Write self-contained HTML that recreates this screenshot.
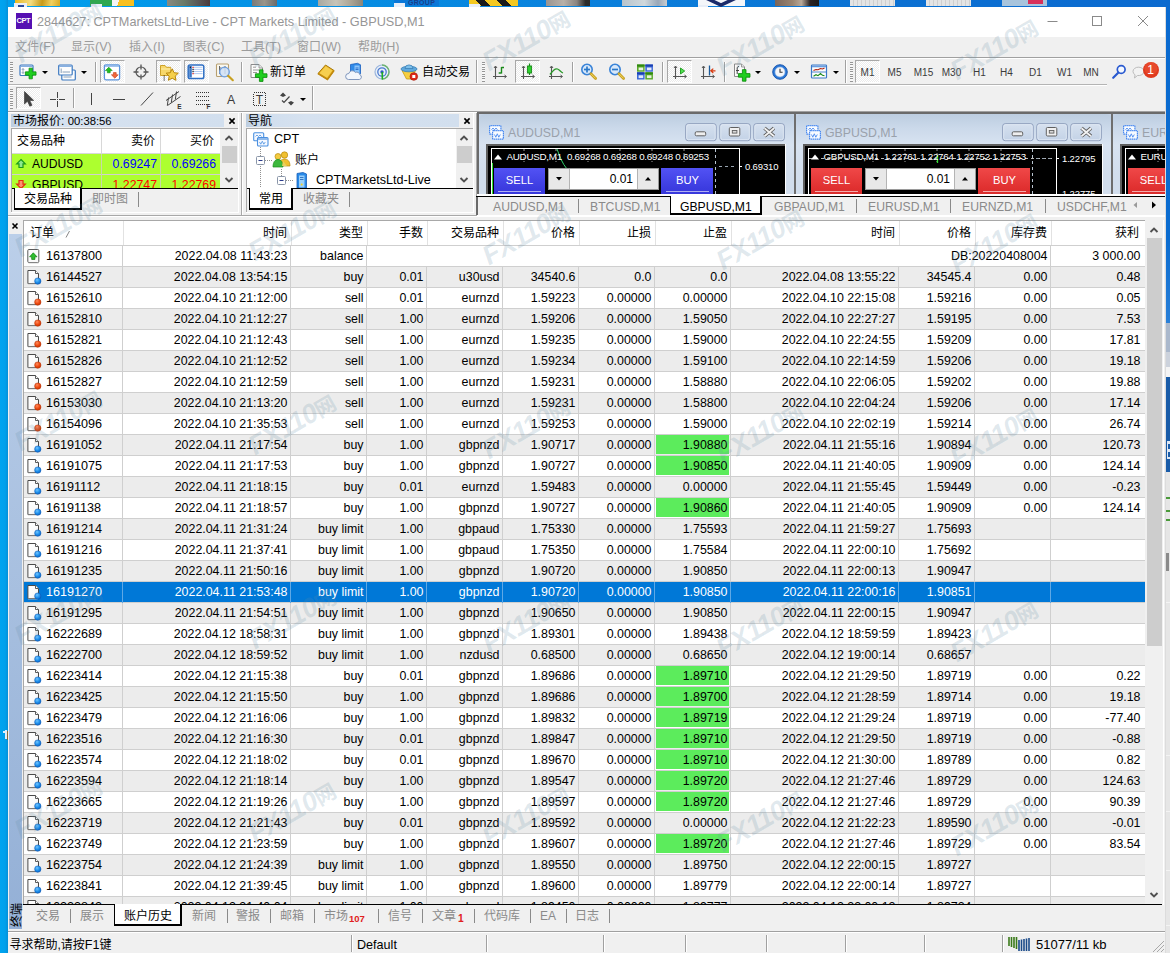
<!DOCTYPE html>
<html lang="zh-CN"><head><meta charset="utf-8"><title>2844627: CPTMarketsLtd-Live - CPT Markets Limited - GBPUSD,M1</title>
<style>
html,body{margin:0;padding:0;}
body{width:1170px;height:953px;overflow:hidden;background:#0a78d4;font-family:"Liberation Sans","Noto Sans CJK SC",sans-serif;font-size:12.5px;color:#000;}
#root{position:absolute;left:0;top:0;width:1170px;height:953px;overflow:hidden;}
#root div{position:absolute;box-sizing:border-box;}
#root span.t{position:absolute;white-space:nowrap;line-height:16px;}
#root span.c{position:absolute;white-space:nowrap;line-height:16px;font-family:"Liberation Sans","Noto Sans CJK SC",sans-serif;font-size:12.5px;}
#root svg{position:absolute;overflow:visible;}

</style></head><body>
<div id="root">
<div style="left:0px;top:0px;width:1170px;height:8px;background:linear-gradient(to right,#00a0ee 0,#0590e4 300px,#0a80dc 600px,#0b70d2 900px,#0b6acf 1170px);"></div>
<div style="left:0px;top:0px;width:8px;height:953px;background:linear-gradient(to right,#00a4f0 0,#00a0ec 5px,#0590d8 8px);"></div>
<div style="left:15px;top:0px;width:45px;height:6px;background:linear-gradient(100deg,#e8b820 0,#f4dc80 35%,#c89a18 60%,#f0d060 80%,#d8a820 100%);"></div>
<div style="left:14px;top:3px;width:13px;height:4px;background:#e8eef8;"></div>
<div style="left:18px;top:5px;width:6px;height:2px;background:#2a4a9a;"></div>
<div style="left:90px;top:0px;width:22px;height:6px;background:#2fa84f;"></div>
<div style="left:112px;top:0px;width:22px;height:6px;background:linear-gradient(110deg,#f4f4f4 0,#f4f4f4 30%,#f8c020 30%);"></div>
<div style="left:91px;top:4px;width:11px;height:3px;background:#e8eef8;"></div>
<div style="left:167px;top:0px;width:43px;height:6px;background:linear-gradient(to right,#8a8a80 0,#6a7a68 40%,#5a5a58 70%,#4a3a3a 100%);"></div>
<div style="left:252px;top:0px;width:25px;height:6px;background:linear-gradient(to right,#7a7a78,#9a958a,#6a6a6a);"></div>
<div style="left:318px;top:0px;width:45px;height:6px;background:linear-gradient(to right,#a8a8a0,#c8c4b8 40%,#b0a898 70%,#8a8478);"></div>
<div style="left:394px;top:0px;width:45px;height:6px;background:#0a78d8;"></div>
<div style="left:394px;top:3px;width:11px;height:4px;background:#e8eef8;"></div>
<span class="t" style="left:408px;top:-1px;font-size:7px;line-height:8px;color:#1a3f8a;font-weight:bold;letter-spacing:0.3px;">GROUP</span>
<div style="left:469px;top:0px;width:49px;height:6px;background:repeating-linear-gradient(45deg,#f4c820 0,#f4c820 9px,#1a1a1a 9px,#1a1a1a 15px);"></div>
<div style="left:469px;top:4px;width:11px;height:3px;background:#e8eef8;"></div>
<div style="left:546px;top:0px;width:44px;height:6px;background:linear-gradient(to right,#9a9490,#b8b0a8 40%,#8a8480 70%,#2a2a2a 90%);"></div>
<div style="left:622px;top:0px;width:45px;height:6px;background:linear-gradient(to right,#b8c4cc,#d0d8dc 50%,#9aa8b8 80%,#c8ccd0);"></div>
<div style="left:698px;top:0px;width:47px;height:6px;background:#f4f6fa;"></div>
<svg style="left:698px;top:0" width="47" height="6" viewBox="0 0 47 6"><path d="M8 -2l15 7 15-7" stroke="#1a2a6a" stroke-width="3.500" fill="none"/></svg>
<div style="left:698px;top:5px;width:10px;height:2px;background:#e8eef8;"></div>
<div style="left:775px;top:0px;width:44px;height:6px;background:linear-gradient(to right,#7a6458,#9a8470 40%,#b8a898 60%,#2a2222 80%,#1a1a1a);"></div>
<div style="left:850px;top:0px;width:45px;height:6px;background:repeating-linear-gradient(to right,#e4e4e4 0,#e4e4e4 3px,#cfcfcf 3px,#cfcfcf 4px);"></div>
<div style="left:926px;top:0px;width:45px;height:6px;background:repeating-linear-gradient(to right,#e4e4e4 0,#e4e4e4 3px,#cfcfcf 3px,#cfcfcf 4px);"></div>
<div style="left:1002px;top:0px;width:45px;height:6px;background:#a8c4dc;"></div>
<div style="left:1028px;top:0px;width:15px;height:4px;background:#d8305a;"></div>
<div style="left:5px;top:730px;width:2px;height:9px;background:#e4eef8;"></div>
<div style="left:3px;top:731px;width:2px;height:2px;background:#e4eef8;"></div>
<div style="left:7px;top:731px;width:1px;height:9px;background:#8a6a3a;"></div>
<div style="left:8px;top:7px;width:1158px;height:946px;background:#f0f0f0;"></div>
<div style="left:8px;top:7px;width:1158px;height:30px;background:#fff;"></div>
<div style="left:16px;top:13px;width:16px;height:16px;background:#5610b2;"></div>
<span class="t" style="left:16.5px;top:14px;font-size:7.5px;font-weight:bold;color:#fff;letter-spacing:-0.4px;line-height:14px;">CPT</span>
<span class="t" style="left:37px;top:13px;font-size:12.7px;color:#969696;line-height:18px;">2844627: CPTMarketsLtd-Live - CPT Markets Limited - GBPUSD,M1</span>
<svg style="left:1040px;top:10px" width="120" height="24" viewBox="0 0 120 24"><g stroke="#8a8a8a" stroke-width="1" fill="none"><path d="M7.5 11.5h10"/><rect x="52.5" y="6.5" width="9" height="9"/><path d="M98 6l10 10M108 6l-10 10"/></g></svg>
<span class="t" style="left:15px;top:38.5px;color:#9c9c9c;font-size:12px;">文件<span style="font-size:12.6px">(F)</span></span>
<span class="t" style="left:71px;top:38.5px;color:#9c9c9c;font-size:12px;">显示<span style="font-size:12.6px">(V)</span></span>
<span class="t" style="left:129px;top:38.5px;color:#9c9c9c;font-size:12px;">插入<span style="font-size:12.6px">(I)</span></span>
<span class="t" style="left:183px;top:38.5px;color:#9c9c9c;font-size:12px;">图表<span style="font-size:12.6px">(C)</span></span>
<span class="t" style="left:241px;top:38.5px;color:#9c9c9c;font-size:12px;">工具<span style="font-size:12.6px">(T)</span></span>
<span class="t" style="left:297px;top:38.5px;color:#9c9c9c;font-size:12px;">窗口<span style="font-size:12.6px">(W)</span></span>
<span class="t" style="left:358px;top:38.5px;color:#9c9c9c;font-size:12px;">帮助<span style="font-size:12.6px">(H)</span></span>
<div style="left:8px;top:57px;width:1158px;height:1px;background:#a0a0a0;"></div>
<div style="left:8px;top:58px;width:1158px;height:1px;background:#fff;"></div>
<div style="left:10px;top:62px;width:3px;height:20px;background:repeating-linear-gradient(to bottom,#969696 0,#969696 1px,#f8f8f8 1px,#f8f8f8 2.330px);"></div>
<div style="left:8px;top:84px;width:1099px;height:1px;background:#b4b4b4;"></div>
<div style="left:8px;top:85px;width:1099px;height:1px;background:#fff;"></div>
<div style="left:100px;top:60px;width:25px;height:23px;background:#f8f8f8;border:1px solid #a8a8a8;border-right-color:#fff;border-bottom-color:#fff;background-image:repeating-conic-gradient(#fff 0 25%,#ececec 0 50%);background-size:2px 2px;"></div>
<div style="left:156px;top:60px;width:25px;height:23px;background:#f8f8f8;border:1px solid #a8a8a8;border-right-color:#fff;border-bottom-color:#fff;background-image:repeating-conic-gradient(#fff 0 25%,#ececec 0 50%);background-size:2px 2px;"></div>
<div style="left:184px;top:60px;width:25px;height:23px;background:#f8f8f8;border:1px solid #a8a8a8;border-right-color:#fff;border-bottom-color:#fff;background-image:repeating-conic-gradient(#fff 0 25%,#ececec 0 50%);background-size:2px 2px;"></div>
<div style="left:515px;top:60px;width:25px;height:23px;background:#f8f8f8;border:1px solid #a8a8a8;border-right-color:#fff;border-bottom-color:#fff;background-image:repeating-conic-gradient(#fff 0 25%,#ececec 0 50%);background-size:2px 2px;"></div>
<div style="left:667px;top:60px;width:25px;height:23px;background:#f8f8f8;border:1px solid #a8a8a8;border-right-color:#fff;border-bottom-color:#fff;background-image:repeating-conic-gradient(#fff 0 25%,#ececec 0 50%);background-size:2px 2px;"></div>
<div style="left:855px;top:60px;width:25px;height:23px;background:#f8f8f8;border:1px solid #a8a8a8;border-right-color:#fff;border-bottom-color:#fff;background-image:repeating-conic-gradient(#fff 0 25%,#ececec 0 50%);background-size:2px 2px;"></div>
<div style="left:95px;top:62px;width:1px;height:20px;background:#a0a0a0;"></div>
<div style="left:96px;top:62px;width:1px;height:20px;background:#fff;"></div>
<div style="left:241px;top:62px;width:1px;height:20px;background:#a0a0a0;"></div>
<div style="left:242px;top:62px;width:1px;height:20px;background:#fff;"></div>
<div style="left:476px;top:60px;width:1px;height:23px;background:#a0a0a0;"></div>
<div style="left:477px;top:60px;width:1px;height:23px;background:#fff;"></div>
<div style="left:482px;top:62px;width:3px;height:20px;background:repeating-linear-gradient(to bottom,#969696 0,#969696 1px,#f8f8f8 1px,#f8f8f8 2.330px);"></div>
<div style="left:572px;top:62px;width:1px;height:20px;background:#a0a0a0;"></div>
<div style="left:573px;top:62px;width:1px;height:20px;background:#fff;"></div>
<div style="left:662px;top:62px;width:1px;height:20px;background:#a0a0a0;"></div>
<div style="left:663px;top:62px;width:1px;height:20px;background:#fff;"></div>
<div style="left:724px;top:62px;width:1px;height:20px;background:#a0a0a0;"></div>
<div style="left:725px;top:62px;width:1px;height:20px;background:#fff;"></div>
<div style="left:845px;top:60px;width:1px;height:23px;background:#a0a0a0;"></div>
<div style="left:846px;top:60px;width:1px;height:23px;background:#fff;"></div>
<div style="left:850px;top:62px;width:3px;height:20px;background:repeating-linear-gradient(to bottom,#969696 0,#969696 1px,#f8f8f8 1px,#f8f8f8 2.330px);"></div>
<svg style="left:42px;top:70.5px" width="6" height="3" viewBox="0 0 6 3"><path d="M0 0h6l-3 3z" fill="#000"/></svg>
<svg style="left:81px;top:70.5px" width="6" height="3" viewBox="0 0 6 3"><path d="M0 0h6l-3 3z" fill="#000"/></svg>
<svg style="left:755px;top:70.5px" width="6" height="3" viewBox="0 0 6 3"><path d="M0 0h6l-3 3z" fill="#000"/></svg>
<svg style="left:794px;top:70.5px" width="6" height="3" viewBox="0 0 6 3"><path d="M0 0h6l-3 3z" fill="#000"/></svg>
<svg style="left:833px;top:70.5px" width="6" height="3" viewBox="0 0 6 3"><path d="M0 0h6l-3 3z" fill="#000"/></svg>
<div style="left:10px;top:89px;width:3px;height:20px;background:repeating-linear-gradient(to bottom,#969696 0,#969696 1px,#f8f8f8 1px,#f8f8f8 2.330px);"></div>
<div style="left:16px;top:87px;width:25px;height:22px;background:#f8f8f8;border:1px solid #a8a8a8;border-right-color:#fff;border-bottom-color:#fff;background-image:repeating-conic-gradient(#fff 0 25%,#ececec 0 50%);background-size:2px 2px;"></div>
<div style="left:73px;top:88px;width:1px;height:20px;background:#a0a0a0;"></div>
<div style="left:74px;top:88px;width:1px;height:20px;background:#fff;"></div>
<div style="left:312px;top:86px;width:1px;height:24px;background:#a0a0a0;"></div>
<div style="left:313px;top:86px;width:1px;height:24px;background:#fff;"></div>
<svg style="left:300px;top:97.5px" width="6" height="3" viewBox="0 0 6 3"><path d="M0 0h6l-3 3z" fill="#000"/></svg>
<span class="t" style="left:270px;top:63.5px;font-size:12px;">新订单</span>
<span class="t" style="left:422px;top:63.5px;font-size:12px;">自动交易</span>
<span class="t" style="left:852.5px;width:30px;text-align:center;top:65.8px;font-size:10px;color:#3c3c3c;line-height:14px;">M1</span>
<span class="t" style="left:879.5px;width:30px;text-align:center;top:65.8px;font-size:10px;color:#3c3c3c;line-height:14px;">M5</span>
<span class="t" style="left:908.5px;width:30px;text-align:center;top:65.8px;font-size:10px;color:#3c3c3c;line-height:14px;">M15</span>
<span class="t" style="left:936.5px;width:30px;text-align:center;top:65.8px;font-size:10px;color:#3c3c3c;line-height:14px;">M30</span>
<span class="t" style="left:964.5px;width:30px;text-align:center;top:65.8px;font-size:10px;color:#3c3c3c;line-height:14px;">H1</span>
<span class="t" style="left:991.5px;width:30px;text-align:center;top:65.8px;font-size:10px;color:#3c3c3c;line-height:14px;">H4</span>
<span class="t" style="left:1020.5px;width:30px;text-align:center;top:65.8px;font-size:10px;color:#3c3c3c;line-height:14px;">D1</span>
<span class="t" style="left:1049.5px;width:30px;text-align:center;top:65.8px;font-size:10px;color:#3c3c3c;line-height:14px;">W1</span>
<span class="t" style="left:1076px;width:30px;text-align:center;top:65.8px;font-size:10px;color:#3c3c3c;line-height:14px;">MN</span>
<svg style="left:17.5px;top:61.5px" width="20" height="20" viewBox="-10.0 -10.0 20 20"><rect x="-8" y="-7" width="13" height="10.5" rx="1" fill="#fdfdfd" stroke="#3b78c0" stroke-width="1.2"/><path d="M-7.5 -5.8h12" stroke="#7aa7de" stroke-width="1.4"/><path d="M-5 -3.5v5M-6.2 -2l1.2-1.5 1.2 1.5M-6.2 0l1.2 1.5 1.2-1.5" stroke="#8aa0b8" stroke-width="0.9" fill="none"/><g transform="translate(2.7,1.5) scale(0.97)"><path d="M-1.7 -5.5h3.4v3.8h3.8v3.4h-3.8v3.8h-3.4v-3.8h-3.8v-3.4h3.8z" fill="#1fce1f" stroke="#0b8a0b" stroke-width="0.8"/></g></svg>
<svg style="left:56.5px;top:61.5px" width="20" height="20" viewBox="-10.0 -10.0 20 20"><rect x="-5.2" y="-2" width="13.5" height="10" rx="1" fill="#fdfdfd" stroke="#3b78c0" stroke-width="1.2"/><rect x="-8.3" y="-7" width="13.5" height="10" rx="1" fill="#fdfdfd" stroke="#3b78c0" stroke-width="1.2"/><path d="M-7.8 -5.8h12.5" stroke="#7aa7de" stroke-width="1.4"/><path d="M-5.8 -3.5v4.5M-4.5 0h7.5M-3.5 5h8" stroke="#8aa0b8" stroke-width="1" fill="none"/></svg>
<svg style="left:102.0px;top:61.5px" width="20" height="20" viewBox="-10.0 -10.0 20 20"><rect x="-7.6" y="-7.2" width="15.2" height="15" rx="1.5" fill="#fff" stroke="#5b94dc" stroke-width="1.3"/><path d="M-7 -6h14" stroke="#8ab4ea" stroke-width="1.6"/><path d="M-3.2 -4.8l3.4 3.4h-2v2.2h-2.8v-2.2h-2z" fill="#1fbf1f" stroke="#0b8a0b" stroke-width="0.6"/><path d="M2.8 6.2l-3.4-3.4h2v-2.2h2.8v2.2h2z" fill="#f0683a" stroke="#c83a10" stroke-width="0.6"/></svg>
<svg style="left:130.5px;top:61.5px" width="20" height="20" viewBox="-10.0 -10.0 20 20"><circle cx="0" cy="0" r="5" fill="none" stroke="#555" stroke-width="1.2"/><path d="M0 -7.5v5M0 2.5v5M-7.5 0h5M2.5 0h5" stroke="#555" stroke-width="1.3"/></svg>
<svg style="left:159.0px;top:61.5px" width="20" height="20" viewBox="-10.0 -10.0 20 20"><path d="M-8.5 -6.5h4.5l1.5 1.8h4.2v8.2h-10.2z" fill="#f7d76a" stroke="#c89a1a" stroke-width="0.9"/><path d="M-8 -3h9.5" stroke="#fbeaa0" stroke-width="1.2"/><path d="M-4.8 3.5v5" stroke="#222" stroke-width="1.2" stroke-dasharray="1 1"/><path d="M3.2 -3.2l1.9 3.9 4.2 0.5-3.1 2.9 0.8 4.2-3.8-2.1-3.8 2.1 0.8-4.2-3.1-2.9 4.2-0.5z" fill="#f5cf4a" stroke="#b8860b" stroke-width="1"/></svg>
<svg style="left:186.0px;top:61.5px" width="20" height="20" viewBox="-10.0 -10.0 20 20"><rect x="-7.8" y="-7" width="15.6" height="13.5" rx="1.8" fill="#fff" stroke="#2f6fc4" stroke-width="1.5"/><rect x="-6.8" y="-6" width="2.6" height="11.5" fill="#3a78c8"/><path d="M-2.5 -4.7h9M-2.5 -2.6h9M-2.5 -0.5h9M-2.5 1.6h9" stroke="#a8c4f0" stroke-width="0.9"/><path d="M-3.6 -4.7h1.3M-3.6 1.6h1.3" stroke="#e02020" stroke-width="1.3"/><path d="M-3.6 -2.6h1.3M-3.6 -0.5h1.3M-6.2 -4.7h1.2" stroke="#222" stroke-width="1.3"/></svg>
<svg style="left:214.0px;top:61.5px" width="20" height="20" viewBox="-10.0 -10.0 20 20"><rect x="-7.5" y="-8" width="12" height="12.5" rx="1" fill="#faf8f0" stroke="#b8a070" stroke-width="1.1"/><path d="M-4.5 -6v8M1 -6v8M-4.5 -4h2M1 -4h-2" stroke="#666" stroke-width="1"/><circle cx="0.5" cy="0" r="4.8" fill="#cfe0f6" fill-opacity="0.85" stroke="#6f9fe0" stroke-width="1.3"/><path d="M4.2 3.8l4.6 4.4" stroke="#c8a020" stroke-width="2.2" stroke-linecap="round"/></svg>
<svg style="left:249.0px;top:61.5px" width="20" height="20" viewBox="-10.0 -10.0 20 20"><path d="M-8 -7.5h8l3.5 3.5v9.5h-11.5z" fill="#fbfbfb" stroke="#8a8a8a" stroke-width="1"/><path d="M0 -7.5v3.5h3.5" fill="#e6e6e6" stroke="#8a8a8a" stroke-width="0.8"/><path d="M-6 -4.8h3M-6 -2h6M-6 0.5h4" stroke="#9a9a9a" stroke-width="1"/><g transform="translate(2.2,3.6) scale(1.05)"><path d="M-1.7 -5.5h3.4v3.8h3.8v3.4h-3.8v3.8h-3.4v-3.8h-3.8v-3.4h3.8z" fill="#1fce1f" stroke="#0b8a0b" stroke-width="0.8"/></g></svg>
<svg style="left:315.5px;top:61.5px" width="20" height="20" viewBox="-10.0 -10.0 20 20"><path d="M-8 1.5l7.5-8.5 8.5 5.5-6.5 9z" fill="#e8b020" stroke="#a87808" stroke-width="1"/><path d="M-6.5 1.2l6.3-7 6.5 4.3-5.3 7.2z" fill="#f6cf50"/><path d="M-8 1.5l9.5 6 6.5-9" fill="none" stroke="#c08a10" stroke-width="1.6"/></svg>
<svg style="left:344.5px;top:61.5px" width="20" height="20" viewBox="-10.0 -10.0 20 20"><path d="M-4.5 -7.5l7-1.2 3 1.5v9h-10z" fill="#2f8ae8" stroke="#1a60c0" stroke-width="0.8"/><path d="M-0.5 -6.5h5v8h-5z" fill="#8cc4fa"/><path d="M0.5 -4h3M0.5 -2.5h3" stroke="#1a60c0" stroke-width="0.8"/><path d="M-6.5 7.5a3 3 0 0 1 0.3-6 3.6 3.6 0 0 1 6.6-1 3 3 0 0 1 4.4 2.2 2.5 2.5 0 0 1-0.5 4.8z" fill="#f2f6fc" stroke="#7f96bc" stroke-width="1"/></svg>
<svg style="left:371.5px;top:61.5px" width="20" height="20" viewBox="-10.0 -10.0 20 20"><circle cx="0" cy="0" r="7" fill="#e8f0f8" stroke="#9ab4dc" stroke-width="1.2"/><path d="M0 7a7 7 0 0 0 0-14" fill="none" stroke="#6fb46f" stroke-width="1.4"/><circle cx="0" cy="0" r="4.2" fill="none" stroke="#4a78d0" stroke-width="1.3"/><circle cx="0" cy="0" r="1.7" fill="#2a58c0"/><path d="M0.3 0v7.5" stroke="#1fae1f" stroke-width="1.6"/></svg>
<svg style="left:398.5px;top:61.5px" width="20" height="20" viewBox="-10.0 -10.0 20 20"><path d="M-7 -1.5h13.5l-3.5 8.5h-5.5z" fill="#f6cf40" stroke="#c89a10" stroke-width="0.8"/><ellipse cx="0" cy="-3" rx="8" ry="2.8" fill="#5fa8dc" stroke="#3a80b8" stroke-width="0.8"/><path d="M-4 -3.5a4 3.6 0 0 1 8 0z" fill="#7fc0ea" stroke="#3a80b8" stroke-width="0.8"/><circle cx="4.8" cy="4.5" r="3.8" fill="#e02818" stroke="#a81808" stroke-width="0.7"/><rect x="3.3" y="3" width="3" height="3" fill="#fff"/></svg>
<svg style="left:490.0px;top:62.2px" width="20" height="20" viewBox="-10.0 -10.0 20 20"><path d="M-4.500 -5.500v12.500M-7 4.500h13" stroke="#555" stroke-width="1.100" fill="none"/><path d="M-6 -4l1.500-2 1.500 2M4.500 3l2 1.500-2 1.500" stroke="#555" stroke-width="1" fill="none"/><path d="M1.500 -5v6.500M1.500 -4.500h2.500M1.500 1h-2.800" stroke="#1a8a1a" stroke-width="1.400" fill="none"/></svg>
<svg style="left:517.5px;top:62.2px" width="20" height="20" viewBox="-10.0 -10.0 20 20"><path d="M-4.500 -5.500v12.500M-7 4.500h13" stroke="#555" stroke-width="1.100" fill="none"/><path d="M-6 -4l1.500-2 1.500 2M4.500 3l2 1.500-2 1.500" stroke="#555" stroke-width="1" fill="none"/><path d="M1.5 -8.5v11.5" stroke="#1a8a1a" stroke-width="1.2"/><rect x="-0.6" y="-6" width="4.2" height="7" fill="#2fd02f" stroke="#1a8a1a" stroke-width="0.9"/></svg>
<svg style="left:545.5px;top:62.2px" width="20" height="20" viewBox="-10.0 -10.0 20 20"><path d="M-4.500 -5.500v12.500M-7 4.500h13" stroke="#555" stroke-width="1.100" fill="none"/><path d="M-6 -4l1.500-2 1.500 2M4.500 3l2 1.500-2 1.500" stroke="#555" stroke-width="1" fill="none"/><path d="M-6 2.5c3-4 5-6.5 7.5-5.5s3 3 5.5 4" stroke="#2a9a2a" stroke-width="1.3" fill="none"/></svg>
<svg style="left:578.5px;top:61.5px" width="20" height="20" viewBox="-10.0 -10.0 20 20"><circle cx="-2" cy="-2.5" r="5.2" fill="#d8e8fa" stroke="#3a84d8" stroke-width="1.6"/><path d="M2 1.800l4.600 4.600" stroke="#c8a020" stroke-width="2.800" stroke-linecap="round"/><path d="M2.200 2l4.200 4.200" stroke="#f0d860" stroke-width="1" stroke-linecap="round"/><path d="M-5 -2.5h6" stroke="#2a78c8" stroke-width="1.7"/><path d="M-2 -5.5v6" stroke="#2a78c8" stroke-width="1.7"/></svg>
<svg style="left:606.5px;top:61.5px" width="20" height="20" viewBox="-10.0 -10.0 20 20"><circle cx="-2" cy="-2.5" r="5.2" fill="#d8e8fa" stroke="#3a84d8" stroke-width="1.6"/><path d="M2 1.800l4.600 4.600" stroke="#c8a020" stroke-width="2.800" stroke-linecap="round"/><path d="M2.200 2l4.200 4.200" stroke="#f0d860" stroke-width="1" stroke-linecap="round"/><path d="M-5 -2.5h6" stroke="#2a78c8" stroke-width="1.7"/></svg>
<svg style="left:635.0px;top:61.5px" width="20" height="20" viewBox="-10.0 -10.0 20 20"><rect x="-8" y="-7.5" width="7.6" height="7.2" fill="#58a828"/><rect x="-8" y="-7.5" width="7.6" height="2" fill="#2f8810"/><rect x="-6.4" y="-4.5" width="4.6" height="2.8" fill="#fff" fill-opacity="0.85"/><rect x="0.3" y="-7.5" width="7.6" height="7.2" fill="#3a68d8"/><rect x="0.3" y="-7.5" width="7.6" height="2" fill="#1a3fb0"/><rect x="1.9000000000000001" y="-4.5" width="4.6" height="2.8" fill="#fff" fill-opacity="0.85"/><rect x="-8" y="0.3" width="7.6" height="7.2" fill="#3a68d8"/><rect x="-8" y="0.3" width="7.6" height="2" fill="#1a3fb0"/><rect x="-6.4" y="3.3" width="4.6" height="2.8" fill="#fff" fill-opacity="0.85"/><rect x="0.3" y="0.3" width="7.6" height="7.2" fill="#58a828"/><rect x="0.3" y="0.3" width="7.6" height="2" fill="#2f8810"/><rect x="1.9000000000000001" y="3.3" width="4.6" height="2.8" fill="#fff" fill-opacity="0.85"/></svg>
<svg style="left:669.5px;top:62.2px" width="20" height="20" viewBox="-10.0 -10.0 20 20"><path d="M-4.500 -5.500v12.500M-7 4.500h13" stroke="#555" stroke-width="1.100" fill="none"/><path d="M-6 -4l1.500-2 1.500 2M4.500 3l2 1.500-2 1.500" stroke="#555" stroke-width="1" fill="none"/><path d="M0.500 -4l4.200 3-4.200 3z" fill="#4fe04f" stroke="#1a9a1a" stroke-width="0.9"/></svg>
<svg style="left:697.5px;top:62.2px" width="20" height="20" viewBox="-10.0 -10.0 20 20"><path d="M-4.500 -5.500v12.500M-7 4.500h13" stroke="#555" stroke-width="1.100" fill="none"/><path d="M-6 -4l1.500-2 1.500 2M4.500 3l2 1.500-2 1.500" stroke="#555" stroke-width="1" fill="none"/><path d="M1.500 -6.500v10" stroke="#1a5a9a" stroke-width="1.300"/><path d="M7.500 -1.200h-4.500M5.300 -3.400l-2.500 2.200 2.500 2.200" stroke="#d83a10" stroke-width="1.200" fill="none"/></svg>
<svg style="left:731.5px;top:61.5px" width="20" height="20" viewBox="-10.0 -10.0 20 20"><path d="M-7.5 -8h7l3 3v9.5h-10z" fill="#fbfbfb" stroke="#8a8a8a" stroke-width="1"/><path d="M-0.5 -8v3h3" fill="#e6e6e6" stroke="#8a8a8a" stroke-width="0.8"/><path d="M-3 -5.5c-1.8 0-1.8 1-1.8 2.5v5M-6 -1.5h3" stroke="#444" stroke-width="1" fill="none"/><g transform="translate(2.2,3.4) scale(1.05)"><path d="M-1.7 -5.5h3.4v3.8h3.8v3.4h-3.8v3.8h-3.4v-3.8h-3.8v-3.4h3.8z" fill="#1fce1f" stroke="#0b8a0b" stroke-width="0.8"/></g></svg>
<svg style="left:769.5px;top:61.5px" width="20" height="20" viewBox="-10.0 -10.0 20 20"><circle cx="0" cy="0" r="7.3" fill="#2a78d8" stroke="#1450a8" stroke-width="0.9"/><circle cx="0" cy="0" r="5" fill="#f4f6fa" stroke="#9ab8e0" stroke-width="0.6"/><path d="M0 -3.2v3.4h2.6" stroke="#333" stroke-width="1.1" fill="none"/></svg>
<svg style="left:809.0px;top:61.5px" width="20" height="20" viewBox="-10.0 -10.0 20 20"><rect x="-7.5" y="-7" width="15" height="13" rx="0.8" fill="#fdfdfd" stroke="#3a78c8" stroke-width="1.2"/><path d="M-7 -5.6h14" stroke="#6a9fe0" stroke-width="1.8"/><path d="M-7 0h14" stroke="#3a78c8" stroke-width="0.9"/><path d="M-5.5 -1.5l2.5-1 2 .3 2.5-1.3 2 .5 2-1" stroke="#b02010" stroke-width="1.1" fill="none"/><path d="M-5.5 4.2l2.5-1.5 2 1 2.5-2.2 2 1.8 2 .5" stroke="#1a8a1a" stroke-width="1.1" fill="none"/></svg>
<svg style="left:1108.5px;top:61.5px" width="20" height="20" viewBox="-10.0 -10.0 20 20"><circle cx="2.2" cy="-2.5" r="3.9" fill="#f4f8ff" stroke="#2a5ad0" stroke-width="1.7"/><path d="M-0.8 0.8l-5 5" stroke="#2a5ad0" stroke-width="2.2" stroke-linecap="round"/></svg>
<svg style="left:1130.0px;top:62.0px" width="22" height="22" viewBox="-11.0 -11.0 22 22"><path d="M-8 -1.5a5.5 4.2 0 1 1 4.5 4l-3 2.5 0.6-3.2a5 4 0 0 1-2.1-3.3z" fill="#f2f2f2" stroke="#b4b4b4" stroke-width="0.9"/></svg>
<svg style="left:1142.0px;top:60.5px" width="18" height="18" viewBox="-9.0 -9.0 18 18"><circle cx="0" cy="0" r="8" fill="#e03a1e"/><circle cx="0" cy="-1.5" r="6.5" fill="#f05a3a" fill-opacity="0.45"/><text x="-0.5" y="4.2" text-anchor="middle" font-family="Liberation Sans,sans-serif" font-size="12" fill="#fff">1</text></svg>
<svg style="left:18.0px;top:89.0px" width="20" height="20" viewBox="-10.0 -10.0 20 20"><path d="M-3.5 -7.5v12.5l3-2.8 2.3 5 2.2-1-2.3-4.8h4z" fill="#444" stroke="#333" stroke-width="0.6"/></svg>
<svg style="left:46.5px;top:89.0px" width="20" height="20" viewBox="-10.0 -10.0 20 20"><path d="M0.500 -7v5.500M0.500 2v5.500M-7 0.500h5.500M2 0.500h5.500" stroke="#444" stroke-width="1" shape-rendering="crispEdges"/><rect x="0" y="0" width="1" height="1" fill="#444"/></svg>
<svg style="left:80.5px;top:89.0px" width="20" height="20" viewBox="-10.0 -10.0 20 20"><path d="M0.500 -6v12" stroke="#444" stroke-width="1" shape-rendering="crispEdges"/></svg>
<svg style="left:108.5px;top:89.0px" width="20" height="20" viewBox="-10.0 -10.0 20 20"><path d="M-6 0.500h12" stroke="#444" stroke-width="1" shape-rendering="crispEdges"/></svg>
<svg style="left:137.0px;top:89.0px" width="20" height="20" viewBox="-10.0 -10.0 20 20"><path d="M-6 6.500l12-13" stroke="#444" stroke-width="1"/></svg>
<svg style="left:164.0px;top:89.0px" width="20" height="20" viewBox="-10.0 -10.0 20 20"><path d="M-8 1.5l13-9M-6.5 6.5l13-9M-5.5 -1.5l-1.2 8M-1.5 -4.5l-1.2 8M2.5 -7.5l-1.2 8" stroke="#444" stroke-width="1" fill="none"/><text x="3.2" y="9.6" font-family="Liberation Sans,sans-serif" font-size="6.5" font-weight="bold" fill="#333">E</text></svg>
<svg style="left:192.5px;top:89.0px" width="20" height="20" viewBox="-10.0 -10.0 20 20"><path d="M-7 -6.500h13M-7 -2.500h13M-7 1.500h13M-7 5.500h13" stroke="#333" stroke-width="1" stroke-dasharray="1 1" shape-rendering="crispEdges"/><text x="3.4" y="9.6" font-family="Liberation Sans,sans-serif" font-size="6.5" font-weight="bold" fill="#333">F</text></svg>
<svg style="left:220.5px;top:89.0px" width="20" height="20" viewBox="-10.0 -10.0 20 20"><text x="0" y="5" text-anchor="middle" font-family="Liberation Sans,sans-serif" font-size="12.3" fill="#3a3a3a">A</text></svg>
<svg style="left:248.5px;top:89.0px" width="20" height="20" viewBox="-10.0 -10.0 20 20"><rect x="-5.500" y="-6.500" width="12" height="13" fill="none" stroke="#333" stroke-width="1" stroke-dasharray="1 1" shape-rendering="crispEdges"/><text x="0.500" y="4.600" text-anchor="middle" font-family="Liberation Sans,sans-serif" font-size="12" fill="#3a3a3a">T</text></svg>
<svg style="left:277.0px;top:89.0px" width="20" height="20" viewBox="-10.0 -10.0 20 20"><path d="M-7 -3.5l3-3 3 3-3 1.6zM7 3.5l-3 3-3-3 3-1.6z" fill="#444"/><path d="M-5 1.5l2 2 5.5-6" stroke="#444" stroke-width="1.2" fill="none"/></svg>
<div style="left:8px;top:111px;width:1158px;height:1px;background:#a0a0a0;"></div>
<div style="left:8px;top:112px;width:1158px;height:1px;background:#fff;"></div>
<div style="left:11px;top:128px;width:227px;height:1px;background:#a8a8a8;"></div>
<div style="left:11px;top:128px;width:1px;height:84px;background:#a8a8a8;"></div>
<div style="left:238px;top:113px;width:1px;height:100px;background:#fff;"></div>
<div style="left:11px;top:212px;width:228px;height:1px;background:#fff;"></div>
<div style="left:241px;top:113px;width:1px;height:102px;background:#a8a8a8;"></div>
<div style="left:242px;top:113px;width:1px;height:102px;background:#fff;"></div>
<div style="left:8px;top:215px;width:1158px;height:1px;background:#a8a8a8;"></div>
<div style="left:11px;top:114px;width:213px;height:13px;background:linear-gradient(to right,#bccde0 0,#d0deee 16px,#d6e2f0 60px,#d2dfee 100%);"></div>
<span class="t" style="left:13px;top:113px;font-size:12px;line-height:16px;">市场报价: <span style="font-size:11.3px">00:38:56</span></span>
<svg style="left:228px;top:116.5px" width="8" height="8" viewBox="-4 -4 8 8"><path d="M-2.6 -2.6L2.6 2.6M2.6 -2.6L-2.6 2.6" stroke="#000" stroke-width="1.6"/></svg>
<div style="left:12px;top:129px;width:208px;height:59px;background:#fff;"></div>
<div style="left:12px;top:153px;width:208px;height:1px;background:#d8d8d8;"></div>
<div style="left:101px;top:129px;width:1px;height:59px;background:#d8d8d8;"></div>
<div style="left:160px;top:129px;width:1px;height:59px;background:#d8d8d8;"></div>
<span class="t" style="left:17px;top:133px;font-size:12px;">交易品种</span>
<span class="t" style="right:1015px;top:133px;font-size:12px;">卖价</span>
<span class="t" style="right:956px;top:133px;font-size:12px;">买价</span>
<div style="left:12px;top:154px;width:208px;height:20px;background:#adff2f;"></div>
<div style="left:12px;top:175px;width:208px;height:13px;background:#adff2f;"></div>
<div style="left:12px;top:174px;width:208px;height:1px;background:#d0d0d0;"></div>
<div style="left:101px;top:154px;width:1px;height:34px;background:#c8d8a8;"></div>
<div style="left:160px;top:154px;width:1px;height:34px;background:#c8d8a8;"></div>
<svg style="left:15px;top:158px" width="12" height="12" viewBox="-6 -6 12 12"><path d="M0 -4.5l4.3 4.3h-2.3v3.7h-4v-3.7h-2.3z" fill="#8fe88f" stroke="#1a9a1a" stroke-width="1.2"/></svg>
<svg style="left:15px;top:178px" width="12" height="12" viewBox="-6 -6 12 12"><path d="M0 4.5l4.3-4.3h-2.3v-3.7h-4v3.7h-2.3z" fill="#ff9070" stroke="#e03010" stroke-width="1.2"/></svg>
<span class="t" style="left:32px;top:156px;font-size:12.1px;">AUDUSD</span>
<span class="t" style="right:1013px;top:156px;font-size:12.3px;color:#0000ff;">0.69247</span>
<span class="t" style="right:954px;top:156px;font-size:12.3px;color:#0000ff;">0.69266</span>
<div style="left:12px;top:175px;width:208px;height:13px;overflow:hidden;"><span class="t" style="left:20px;top:2px;font-size:12.1px;">GBPUSD</span><span class="t" style="right:63px;top:2px;font-size:12.3px;color:#ff0000;">1.22747</span><span class="t" style="right:4px;top:2px;font-size:12.3px;color:#ff0000;">1.22769</span></div>
<div style="left:221px;top:129px;width:17px;height:59px;background:#f0f0f0;"></div>
<div style="left:222px;top:146px;width:15px;height:17px;background:#cdcdcd;"></div>
<svg style="left:224px;top:134px" width="10" height="8" viewBox="-5 -4 10 8"><path d="M-3.5 2l3.5-3.5 3.5 3.5" stroke="#505050" stroke-width="1.9" fill="none"/></svg>
<svg style="left:224px;top:176px" width="10" height="8" viewBox="-5 -4 10 8"><path d="M-3.5 -2l3.5 3.5 3.5-3.5" stroke="#505050" stroke-width="1.9" fill="none"/></svg>
<div style="left:12px;top:188px;width:226px;height:1px;background:#000;"></div>
<div style="left:14px;top:188px;width:68px;height:22px;background:#fff;border:1px solid #000;border-top:none;border-right-width:2px;border-bottom-width:2px;"></div>
<div style="left:15px;top:188px;width:65px;height:1px;background:#fff;"></div>
<span class="t" style="left:24px;top:191px;font-size:12px;">交易品种</span>
<span class="t" style="left:92px;top:191px;font-size:12px;color:#8a8a8a;">即时图</span>
<div style="left:138px;top:192px;width:1px;height:15px;background:#8a8a8a;"></div>
<div style="left:246px;top:128px;width:227px;height:1px;background:#a8a8a8;"></div>
<div style="left:246px;top:128px;width:1px;height:84px;background:#a8a8a8;"></div>
<div style="left:473px;top:113px;width:1px;height:100px;background:#fff;"></div>
<div style="left:246px;top:212px;width:228px;height:1px;background:#fff;"></div>
<div style="left:476px;top:113px;width:1px;height:102px;background:#a8a8a8;"></div>
<div style="left:246px;top:114px;width:213px;height:13px;background:linear-gradient(to right,#bccde0 0,#d0deee 16px,#d6e2f0 60px,#d2dfee 100%);"></div>
<span class="t" style="left:248px;top:113px;font-size:12px;line-height:16px;">导航</span>
<svg style="left:463px;top:116.5px" width="8" height="8" viewBox="-4 -4 8 8"><path d="M-2.6 -2.6L2.6 2.6M2.6 -2.6L-2.6 2.6" stroke="#000" stroke-width="1.6"/></svg>
<div style="left:247px;top:129px;width:209px;height:59px;background:#fff;"></div>
<div style="left:456px;top:129px;width:17px;height:59px;background:#f0f0f0;"></div>
<div style="left:457px;top:146px;width:15px;height:17px;background:#cdcdcd;"></div>
<svg style="left:459px;top:134px" width="10" height="8" viewBox="-5 -4 10 8"><path d="M-3.5 2l3.5-3.5 3.5 3.5" stroke="#505050" stroke-width="1.9" fill="none"/></svg>
<svg style="left:459px;top:176px" width="10" height="8" viewBox="-5 -4 10 8"><path d="M-3.5 -2l3.5 3.5 3.5-3.5" stroke="#505050" stroke-width="1.9" fill="none"/></svg>
<span class="t" style="left:274px;top:131px;font-size:12.6px;">CPT</span>
<span class="t" style="left:295px;top:152px;font-size:12px;">账户</span>
<span class="t" style="left:316px;top:172px;font-size:12.6px;">CPTMarketsLtd-Live</span>
<div style="left:247px;top:129px;width:209px;height:59px;overflow:hidden;">
<svg style="left:6px;top:3px" width="16" height="15" viewBox="0 0 16 15"><rect x="0.7" y="0.7" width="10" height="8" rx="1" fill="#f4f8ff" stroke="#4a90e0" stroke-width="1.100"/><path d="M2.500 4.500l1.500-1.500 1.500 1.500 1.500-1.500 1.500 1.500" stroke="#4a90e0" stroke-width="0.8" fill="none"/><rect x="4.500" y="5.500" width="10.500" height="8.500" rx="1" fill="#f4f8ff" stroke="#4a90e0" stroke-width="1.100"/><path d="M5 7h9.500" stroke="#4a90e0" stroke-width="1.200"/><path d="M6.500 10l1.300 2.200 1.500-3 1.500 3 1.500-2.200" stroke="#4a90e0" stroke-width="0.8" fill="none"/></svg>
<svg style="left:0;top:0" width="209" height="59" viewBox="247 129 209 59"><g stroke="#909090" stroke-width="1" stroke-dasharray="1 1" fill="none"><path d="M260.500 147v10M260.500 166v24M265 160.500h7M281.500 169v8M286 180.500h7"/></g><g fill="#fff" stroke="#8a96a8" stroke-width="1"><rect x="256.500" y="156.500" width="8" height="8" rx="1"/><rect x="277.500" y="176.500" width="8" height="8" rx="1"/></g><path d="M258.500 160.500h4M279.500 180.500h4" stroke="#2a3a8a" stroke-width="1"/><g><circle cx="284.500" cy="155" r="3.200" fill="#f0c030" stroke="#b88a10" stroke-width="0.700"/><path d="M279 166c0-5 2.500-7 5.500-7s5.500 2 5.500 7z" fill="#f0c030" stroke="#b88a10" stroke-width="0.700"/><circle cx="278" cy="156.500" r="3" fill="#f4cc40" stroke="#b88a10" stroke-width="0.700"/><path d="M273 167c0-5 2-7.500 5-7.500s5 2.500 5 7.500z" fill="#3cb83c" stroke="#1a8a1a" stroke-width="0.700"/><path d="M283 161l4 5h-5z" fill="#e8d060"/></g><g><path d="M297 173.500l6-1 3.500 1.500v14h-9.500z" fill="#2a8ae8" stroke="#1a60b8" stroke-width="0.800"/><path d="M299 175.500h5.500v12h-5.500z" fill="#9ad0fa"/><path d="M300 177.500h3.500M300 179.500h3.500" stroke="#1a60b8" stroke-width="0.800"/><circle cx="301.700" cy="184.500" r="1" fill="#f4d020"/></g></svg>
</div>
<div style="left:247px;top:188px;width:226px;height:1px;background:#000;"></div>
<div style="left:249px;top:188px;width:44px;height:22px;background:#fff;border:1px solid #000;border-top:none;border-right-width:2px;border-bottom-width:2px;"></div>
<div style="left:250px;top:188px;width:41px;height:1px;background:#fff;"></div>
<span class="t" style="left:259px;top:191px;font-size:12px;">常用</span>
<span class="t" style="left:303px;top:191px;font-size:12px;color:#8a8a8a;">收藏夹</span>
<div style="left:349px;top:192px;width:1px;height:15px;background:#8a8a8a;"></div>
<div style="left:477px;top:112px;width:689px;height:85px;background:#c4d2e4;"></div>
<div style="left:477px;top:112px;width:689px;height:2px;background:#6a6a6a;"></div>
<div style="left:477px;top:112px;width:2px;height:85px;background:#6a6a6a;"></div>
<div style="left:479px;top:114px;width:316px;height:80px;overflow:hidden;background:linear-gradient(to bottom,#bccde0 0,#cbd9ea 14px,#d8e3f1 31px,#d2deed 60px);border-radius:6px 6px 0 0;">
<svg style="left:10px;top:11px" width="16" height="15" viewBox="0 0 16 15"><rect x="0.6" y="0.6" width="11.300" height="8.600" rx="0.8" fill="#f8fbff" stroke="#4a8af0" stroke-width="1.200" stroke-dasharray="1.500 0.500"/><path d="M2.500 4.800l1.500-1.800 1.500 1.800 1.500-1.800 1.500 1.800" stroke="#4a8af0" stroke-width="0.900" fill="none"/><rect x="3.600" y="5.600" width="10.800" height="8.600" rx="0.8" fill="#f8fbff" stroke="#4a8af0" stroke-width="1.200" stroke-dasharray="1.500 0.500"/><path d="M5.500 9.500l1.300 2.700 1.500-3.400 1.500 3.400 1.500-2.700" stroke="#4a8af0" stroke-width="0.900" fill="none"/></svg>
<span class="t" style="left:29px;top:11px;font-size:12.3px;color:#9aa1ab;line-height:16px;">AUDUSD,M1</span>
<svg style="left:205px;top:8px" width="104" height="20" viewBox="0 0 104 20"><defs><linearGradient id="bg479" x1="0" y1="0" x2="0" y2="1"><stop offset="0" stop-color="#d6e1ef"/><stop offset="1" stop-color="#c3d2e6"/></linearGradient></defs><rect x="1.7" y="1.7" width="30.5" height="17" rx="2.5" fill="url(#bg479)" stroke="#8d9dbb" stroke-width="1"/><rect x="2.7" y="2.7" width="28.500" height="15" rx="1.800" fill="none" stroke="#e4ecf6" stroke-width="0.8"/><rect x="35.8" y="1.7" width="30.5" height="17" rx="2.5" fill="url(#bg479)" stroke="#8d9dbb" stroke-width="1"/><rect x="36.8" y="2.7" width="28.500" height="15" rx="1.800" fill="none" stroke="#e4ecf6" stroke-width="0.8"/><rect x="69.8" y="1.7" width="30.5" height="17" rx="2.5" fill="url(#bg479)" stroke="#8d9dbb" stroke-width="1"/><rect x="70.8" y="2.7" width="28.500" height="15" rx="1.800" fill="none" stroke="#e4ecf6" stroke-width="0.8"/><rect x="11.200" y="9.800" width="10.500" height="4" rx="1.200" fill="#eeeeee" stroke="#606060" stroke-width="1"/><rect x="45.300" y="5.500" width="10.500" height="8.500" rx="1.200" fill="#f0f0f0" stroke="#606060" stroke-width="1"/><rect x="48.300" y="8.500" width="4.600" height="2.600" fill="#d8d8d8" stroke="#606060" stroke-width="0.9"/><path d="M80.500 6.200l9.500 8M90 6.200l-9.500 8" stroke="#606060" stroke-width="3.600" stroke-linecap="butt"/><path d="M80.500 6.200l9.500 8M90 6.200l-9.500 8" stroke="#f2f2f2" stroke-width="1.800"/></svg>
<div style="left:306px;top:30px;width:1px;height:60px;background:#fff;"></div>
<div style="left:7px;top:30px;width:299px;height:60px;background:#000;border-top:2px solid #5e5e5e;overflow:hidden;">
<div style="left:0;top:0;width:2px;height:60px;background:#5e5e5e;"></div>
<div style="left:5px;top:2px;width:249px;height:60px;border:1px solid #fff;border-bottom:none;"></div>
<svg style="left:1px;top:-1px" width="300" height="60"><path d="M70 4c3 8 5 14 10 20" stroke="#2fd06a" stroke-width="1" fill="none"/><path d="M5.500 18v45" stroke="#2fe02f" stroke-width="1"/><path d="M37 4v13M69 4v13M101 4v13M133 4v13M165 4v13M197 4v13" stroke="#999" stroke-width="1" stroke-dasharray="2 2"/></svg>
<svg style="left:8px;top:8px" width="8" height="6" viewBox="0 0 8 6"><path d="M0 5.5l4-5 4 5z" fill="#fff"/></svg>
<span class="t" style="left:20.500px;top:4px;font-size:9.8px;letter-spacing:-0.25px;color:#fff;line-height:13px;">AUDUSD,M1&nbsp; 0.69268 0.69268 0.69248 0.69253</span>
<div style="left:8px;top:22px;width:51px;height:40px;background:linear-gradient(to bottom,#5252f4,#3c3ce0 50%,#2c2cd0);"></div>
<span class="t" style="left:8px;width:51px;text-align:center;top:26px;font-size:11.2px;color:#fff;">SELL</span>
<div style="left:12px;top:45px;width:43px;height:1px;background:rgba(255,255,255,0.6);"></div>
<div style="left:62px;top:22px;width:111px;height:22px;background:#e8e8e8;border:1px solid #9a9a9a;"></div>
<div style="left:83px;top:23px;width:69px;height:20px;background:#fff;border-left:1px solid #b4b4b4;border-right:1px solid #b4b4b4;"></div>
<span class="t" style="left:83px;width:64px;text-align:right;top:25px;font-size:12px;color:#000;">0.01</span>
<svg style="left:69.500px;top:31px" width="6" height="4" viewBox="0 0 6 4"><path d="M0 0h6l-3 3.5z" fill="#000"/></svg>
<svg style="left:158.500px;top:31px" width="6" height="4" viewBox="0 0 6 4"><path d="M0 3.500h6l-3-3.500z" fill="#000"/></svg>
<div style="left:175px;top:22px;width:52px;height:40px;background:linear-gradient(to bottom,#5252f4,#3c3ce0 50%,#2c2cd0);"></div>
<span class="t" style="left:176px;width:51px;text-align:center;top:26px;font-size:11.2px;color:#fff;">BUY</span>
<div style="left:180px;top:45px;width:43px;height:1px;background:rgba(255,255,255,0.6);"></div>
<div style="left:229px;top:3px;width:1px;height:60px;background:repeating-linear-gradient(to bottom,#b8c4d0 0,#b8c4d0 3px,transparent 3px,transparent 6px);"></div>
<div style="left:233px;top:20px;width:18px;height:1px;background:repeating-linear-gradient(to right,#98a4b0 0,#98a4b0 3px,transparent 3px,transparent 6px);"></div>
<div style="left:254px;top:20px;width:2px;height:1px;background:#fff;"></div>
<span class="t" style="left:259px;top:14px;font-size:9.5px;letter-spacing:-0.15px;color:#fff;line-height:13px;">0.69310</span>
</div></div>
<div style="left:796px;top:114px;width:316px;height:80px;overflow:hidden;background:linear-gradient(to bottom,#bccde0 0,#cbd9ea 14px,#d8e3f1 31px,#d2deed 60px);border-radius:6px 6px 0 0;">
<svg style="left:10px;top:11px" width="16" height="15" viewBox="0 0 16 15"><rect x="0.6" y="0.6" width="11.300" height="8.600" rx="0.8" fill="#f8fbff" stroke="#4a8af0" stroke-width="1.200" stroke-dasharray="1.500 0.500"/><path d="M2.500 4.800l1.500-1.800 1.500 1.800 1.500-1.800 1.500 1.800" stroke="#4a8af0" stroke-width="0.900" fill="none"/><rect x="3.600" y="5.600" width="10.800" height="8.600" rx="0.8" fill="#f8fbff" stroke="#4a8af0" stroke-width="1.200" stroke-dasharray="1.500 0.500"/><path d="M5.500 9.500l1.300 2.700 1.500-3.400 1.500 3.400 1.500-2.700" stroke="#4a8af0" stroke-width="0.900" fill="none"/></svg>
<span class="t" style="left:29px;top:11px;font-size:12.3px;color:#9aa1ab;line-height:16px;">GBPUSD,M1</span>
<svg style="left:205px;top:8px" width="104" height="20" viewBox="0 0 104 20"><defs><linearGradient id="bg796" x1="0" y1="0" x2="0" y2="1"><stop offset="0" stop-color="#d6e1ef"/><stop offset="1" stop-color="#c3d2e6"/></linearGradient></defs><rect x="1.7" y="1.7" width="30.5" height="17" rx="2.5" fill="url(#bg796)" stroke="#8d9dbb" stroke-width="1"/><rect x="2.7" y="2.7" width="28.500" height="15" rx="1.800" fill="none" stroke="#e4ecf6" stroke-width="0.8"/><rect x="35.8" y="1.7" width="30.5" height="17" rx="2.5" fill="url(#bg796)" stroke="#8d9dbb" stroke-width="1"/><rect x="36.8" y="2.7" width="28.500" height="15" rx="1.800" fill="none" stroke="#e4ecf6" stroke-width="0.8"/><rect x="69.8" y="1.7" width="30.5" height="17" rx="2.5" fill="url(#bg796)" stroke="#8d9dbb" stroke-width="1"/><rect x="70.8" y="2.7" width="28.500" height="15" rx="1.800" fill="none" stroke="#e4ecf6" stroke-width="0.8"/><rect x="11.200" y="9.800" width="10.500" height="4" rx="1.200" fill="#eeeeee" stroke="#606060" stroke-width="1"/><rect x="45.300" y="5.500" width="10.500" height="8.500" rx="1.200" fill="#f0f0f0" stroke="#606060" stroke-width="1"/><rect x="48.300" y="8.500" width="4.600" height="2.600" fill="#d8d8d8" stroke="#606060" stroke-width="0.9"/><path d="M80.500 6.200l9.500 8M90 6.200l-9.500 8" stroke="#606060" stroke-width="3.600" stroke-linecap="butt"/><path d="M80.500 6.200l9.500 8M90 6.200l-9.500 8" stroke="#f2f2f2" stroke-width="1.800"/></svg>
<div style="left:306px;top:30px;width:1px;height:60px;background:#fff;"></div>
<div style="left:7px;top:30px;width:299px;height:60px;background:#000;border-top:2px solid #5e5e5e;overflow:hidden;">
<div style="left:0;top:0;width:2px;height:60px;background:#5e5e5e;"></div>
<div style="left:5px;top:2px;width:249px;height:60px;border:1px solid #fff;border-bottom:none;"></div>
<svg style="left:1px;top:-1px" width="300" height="60"><path d="M5 13.500h245" stroke="#bbb" stroke-width="1" stroke-dasharray="3 3"/><path d="M37 4v13M69 4v13M101 4v13M133 4v13M165 4v13M197 4v13" stroke="#999" stroke-width="1" stroke-dasharray="2 2"/><path d="M133.500 10v8" stroke="#2fe02f" stroke-width="1.3"/></svg>
<svg style="left:8px;top:8px" width="8" height="6" viewBox="0 0 8 6"><path d="M0 5.5l4-5 4 5z" fill="#fff"/></svg>
<span class="t" style="left:20.500px;top:4px;font-size:9.8px;letter-spacing:-0.25px;color:#fff;line-height:13px;">GBPUSD,M1&nbsp; 1.22761 1.22764 1.22752 1.22753</span>
<div style="left:8px;top:22px;width:51px;height:40px;background:linear-gradient(to bottom,#f04848,#e03030 50%,#c82222);"></div>
<span class="t" style="left:8px;width:51px;text-align:center;top:26px;font-size:11.2px;color:#fff;">SELL</span>
<div style="left:12px;top:45px;width:43px;height:1px;background:rgba(255,255,255,0.6);"></div>
<div style="left:62px;top:22px;width:111px;height:22px;background:#e8e8e8;border:1px solid #9a9a9a;"></div>
<div style="left:83px;top:23px;width:69px;height:20px;background:#fff;border-left:1px solid #b4b4b4;border-right:1px solid #b4b4b4;"></div>
<span class="t" style="left:83px;width:64px;text-align:right;top:25px;font-size:12px;color:#000;">0.01</span>
<svg style="left:69.500px;top:31px" width="6" height="4" viewBox="0 0 6 4"><path d="M0 0h6l-3 3.5z" fill="#000"/></svg>
<svg style="left:158.500px;top:31px" width="6" height="4" viewBox="0 0 6 4"><path d="M0 3.500h6l-3-3.500z" fill="#000"/></svg>
<div style="left:175px;top:22px;width:52px;height:40px;background:linear-gradient(to bottom,#f04848,#e03030 50%,#c82222);"></div>
<span class="t" style="left:176px;width:51px;text-align:center;top:26px;font-size:11.2px;color:#fff;">BUY</span>
<div style="left:180px;top:45px;width:43px;height:1px;background:rgba(255,255,255,0.6);"></div>
<div style="left:229px;top:3px;width:1px;height:60px;background:repeating-linear-gradient(to bottom,#b8c4d0 0,#b8c4d0 3px,transparent 3px,transparent 6px);"></div>
<div style="left:233px;top:12px;width:18px;height:1px;background:repeating-linear-gradient(to right,#98a4b0 0,#98a4b0 3px,transparent 3px,transparent 6px);"></div>
<div style="left:254px;top:12px;width:2px;height:1px;background:#fff;"></div>
<span class="t" style="left:259px;top:6px;font-size:9.5px;letter-spacing:-0.15px;color:#fff;line-height:13px;">1.22795</span>
</div></div>
<div style="left:1113px;top:114px;width:316px;height:80px;overflow:hidden;background:linear-gradient(to bottom,#bccde0 0,#cbd9ea 14px,#d8e3f1 31px,#d2deed 60px);border-radius:6px 6px 0 0;">
<svg style="left:10px;top:11px" width="16" height="15" viewBox="0 0 16 15"><rect x="0.6" y="0.6" width="11.300" height="8.600" rx="0.8" fill="#f8fbff" stroke="#4a8af0" stroke-width="1.200" stroke-dasharray="1.500 0.500"/><path d="M2.500 4.800l1.500-1.800 1.500 1.800 1.500-1.800 1.500 1.800" stroke="#4a8af0" stroke-width="0.900" fill="none"/><rect x="3.600" y="5.600" width="10.800" height="8.600" rx="0.8" fill="#f8fbff" stroke="#4a8af0" stroke-width="1.200" stroke-dasharray="1.500 0.500"/><path d="M5.500 9.500l1.300 2.700 1.500-3.400 1.500 3.400 1.500-2.700" stroke="#4a8af0" stroke-width="0.900" fill="none"/></svg>
<span class="t" style="left:29px;top:11px;font-size:12.3px;color:#9aa1ab;line-height:16px;">EURUSD,M1</span>
<svg style="left:205px;top:8px" width="104" height="20" viewBox="0 0 104 20"><defs><linearGradient id="bg1113" x1="0" y1="0" x2="0" y2="1"><stop offset="0" stop-color="#d6e1ef"/><stop offset="1" stop-color="#c3d2e6"/></linearGradient></defs><rect x="1.7" y="1.7" width="30.5" height="17" rx="2.5" fill="url(#bg1113)" stroke="#8d9dbb" stroke-width="1"/><rect x="2.7" y="2.7" width="28.500" height="15" rx="1.800" fill="none" stroke="#e4ecf6" stroke-width="0.8"/><rect x="35.8" y="1.7" width="30.5" height="17" rx="2.5" fill="url(#bg1113)" stroke="#8d9dbb" stroke-width="1"/><rect x="36.8" y="2.7" width="28.500" height="15" rx="1.800" fill="none" stroke="#e4ecf6" stroke-width="0.8"/><rect x="69.8" y="1.7" width="30.5" height="17" rx="2.5" fill="url(#bg1113)" stroke="#8d9dbb" stroke-width="1"/><rect x="70.8" y="2.7" width="28.500" height="15" rx="1.800" fill="none" stroke="#e4ecf6" stroke-width="0.8"/><rect x="11.200" y="9.800" width="10.500" height="4" rx="1.200" fill="#eeeeee" stroke="#606060" stroke-width="1"/><rect x="45.300" y="5.500" width="10.500" height="8.500" rx="1.200" fill="#f0f0f0" stroke="#606060" stroke-width="1"/><rect x="48.300" y="8.500" width="4.600" height="2.600" fill="#d8d8d8" stroke="#606060" stroke-width="0.9"/><path d="M80.500 6.200l9.500 8M90 6.200l-9.500 8" stroke="#606060" stroke-width="3.600" stroke-linecap="butt"/><path d="M80.500 6.200l9.500 8M90 6.200l-9.500 8" stroke="#f2f2f2" stroke-width="1.800"/></svg>
<div style="left:306px;top:30px;width:1px;height:60px;background:#fff;"></div>
<div style="left:7px;top:30px;width:299px;height:60px;background:#000;border-top:2px solid #5e5e5e;overflow:hidden;">
<div style="left:0;top:0;width:2px;height:60px;background:#5e5e5e;"></div>
<div style="left:5px;top:2px;width:249px;height:60px;border:1px solid #fff;border-bottom:none;"></div>
<svg style="left:1px;top:-1px" width="300" height="60"><path d="M37 4v13M69 4v13" stroke="#999" stroke-width="1" stroke-dasharray="2 2"/></svg>
<svg style="left:8px;top:8px" width="8" height="6" viewBox="0 0 8 6"><path d="M0 5.5l4-5 4 5z" fill="#fff"/></svg>
<span class="t" style="left:20.500px;top:4px;font-size:9.8px;letter-spacing:-0.25px;color:#fff;line-height:13px;">EURUSD,M1&nbsp; 1.02761 1.02764 1.02752 1.02753</span>
<div style="left:8px;top:22px;width:51px;height:40px;background:linear-gradient(to bottom,#f04848,#e03030 50%,#c82222);"></div>
<span class="t" style="left:8px;width:51px;text-align:center;top:26px;font-size:11.2px;color:#fff;">SELL</span>
<div style="left:12px;top:45px;width:43px;height:1px;background:rgba(255,255,255,0.6);"></div>
<div style="left:62px;top:22px;width:111px;height:22px;background:#e8e8e8;border:1px solid #9a9a9a;"></div>
<div style="left:83px;top:23px;width:69px;height:20px;background:#fff;border-left:1px solid #b4b4b4;border-right:1px solid #b4b4b4;"></div>
<span class="t" style="left:83px;width:64px;text-align:right;top:25px;font-size:12px;color:#000;">0.01</span>
<svg style="left:69.500px;top:31px" width="6" height="4" viewBox="0 0 6 4"><path d="M0 0h6l-3 3.5z" fill="#000"/></svg>
<svg style="left:158.500px;top:31px" width="6" height="4" viewBox="0 0 6 4"><path d="M0 3.500h6l-3-3.500z" fill="#000"/></svg>
<div style="left:175px;top:22px;width:52px;height:40px;background:linear-gradient(to bottom,#f04848,#e03030 50%,#c82222);"></div>
<span class="t" style="left:176px;width:51px;text-align:center;top:26px;font-size:11.2px;color:#fff;">BUY</span>
<div style="left:180px;top:45px;width:43px;height:1px;background:rgba(255,255,255,0.6);"></div>
<div style="left:229px;top:3px;width:1px;height:60px;background:repeating-linear-gradient(to bottom,#b8c4d0 0,#b8c4d0 3px,transparent 3px,transparent 6px);"></div>
<div style="left:233px;top:12px;width:18px;height:1px;background:repeating-linear-gradient(to right,#98a4b0 0,#98a4b0 3px,transparent 3px,transparent 6px);"></div>
<div style="left:254px;top:12px;width:2px;height:1px;background:#fff;"></div>
<span class="t" style="left:259px;top:6px;font-size:9.5px;letter-spacing:-0.15px;color:#fff;line-height:13px;">1.02795</span>
</div></div>
<div style="left:1058px;top:187px;width:45px;height:7px;overflow:hidden;"><span class="t" style="left:4px;top:0px;font-size:9.5px;letter-spacing:-0.15px;color:#fff;line-height:13px;">1.22775</span></div>
<div style="left:794px;top:114px;width:2px;height:83px;background:#6e6e6e;"></div>
<div style="left:1111px;top:114px;width:2px;height:83px;background:#6e6e6e;"></div>
<div style="left:477px;top:194px;width:689px;height:2px;background:#fff;"></div>
<div style="left:477px;top:197px;width:689px;height:18px;background:#f0f0f0;"></div>
<div style="left:477px;top:215px;width:689px;height:1px;background:#fff;"></div>
<div style="left:476px;top:196px;width:690px;height:1px;background:#000;"></div>
<div style="left:476px;top:197px;width:2px;height:18px;background:#6a6a6a;"></div>
<div style="left:670px;top:196px;width:92px;height:19px;background:#fff;border:1px solid #000;border-top:none;border-right-width:2px;border-bottom-width:2px;"></div>
<div style="left:671px;top:196px;width:89px;height:1px;background:#fff;"></div>
<span class="t" style="left:493px;top:198.5px;font-size:12.2px;color:#8a8a8a;">AUDUSD,M1</span>
<span class="t" style="left:590px;top:198.5px;font-size:12.2px;color:#8a8a8a;">BTCUSD,M1</span>
<span class="t" style="left:680px;top:198.5px;font-size:12.2px;color:#000;">GBPUSD,M1</span>
<span class="t" style="left:774px;top:198.5px;font-size:12.2px;color:#8a8a8a;">GBPAUD,M1</span>
<span class="t" style="left:868px;top:198.5px;font-size:12.2px;color:#8a8a8a;">EURUSD,M1</span>
<span class="t" style="left:962px;top:198.5px;font-size:12.2px;color:#8a8a8a;">EURNZD,M1</span>
<span class="t" style="left:1057px;top:198.5px;font-size:12.2px;color:#8a8a8a;">USDCHF,M1</span>
<div style="left:578px;top:199px;width:1px;height:14px;background:#8a8a8a;"></div>
<div style="left:856px;top:199px;width:1px;height:14px;background:#8a8a8a;"></div>
<div style="left:950px;top:199px;width:1px;height:14px;background:#8a8a8a;"></div>
<div style="left:1045px;top:199px;width:1px;height:14px;background:#8a8a8a;"></div>
<svg style="left:1128px;top:200px" width="30" height="10" viewBox="0 0 30 10"><path d="M9 2v6l-3.500-3z" fill="#9a9a9a"/><path d="M24 1.500v7l4-3.500z" fill="#000"/></svg>
<div style="left:8px;top:216px;width:1158px;height:1px;background:#fff;"></div>
<div style="left:8px;top:218px;width:15px;height:16px;background:#f0f0f0;"></div>
<div style="left:9px;top:234px;width:13px;height:695px;background:linear-gradient(to bottom,#bbcfe9,#94b0d6);"></div>
<svg style="left:11px;top:222px" width="8" height="8" viewBox="-4 -4 8 8"><path d="M-2.5 -2.5L2.5 2.5M2.5 -2.5L-2.5 2.5" stroke="#000" stroke-width="1.6"/></svg>
<div style="left:23px;top:220px;width:1140px;height:1px;background:#a8a8a8;"></div>
<div style="left:23px;top:220px;width:1px;height:685px;background:#a8a8a8;"></div>
<div style="left:24px;top:221px;width:1139px;height:684px;background:#fff;"></div>
<span class="t" style="left:30px;top:225px;font-size:12px;">订单</span>
<div style="left:123px;top:221px;width:1px;height:24px;background:#e2e2e2;"></div>
<span class="t" style="right:883px;top:225px;font-size:12px;">时间</span>
<div style="left:291px;top:221px;width:1px;height:24px;background:#e2e2e2;"></div>
<span class="t" style="right:807px;top:225px;font-size:12px;">类型</span>
<div style="left:367px;top:221px;width:1px;height:24px;background:#e2e2e2;"></div>
<span class="t" style="right:747px;top:225px;font-size:12px;">手数</span>
<div style="left:427px;top:221px;width:1px;height:24px;background:#e2e2e2;"></div>
<span class="t" style="right:671px;top:225px;font-size:12px;">交易品种</span>
<div style="left:503px;top:221px;width:1px;height:24px;background:#e2e2e2;"></div>
<span class="t" style="right:595px;top:225px;font-size:12px;">价格</span>
<div style="left:579px;top:221px;width:1px;height:24px;background:#e2e2e2;"></div>
<span class="t" style="right:519px;top:225px;font-size:12px;">止损</span>
<div style="left:655px;top:221px;width:1px;height:24px;background:#e2e2e2;"></div>
<span class="t" style="right:443px;top:225px;font-size:12px;">止盈</span>
<div style="left:731px;top:221px;width:1px;height:24px;background:#e2e2e2;"></div>
<span class="t" style="right:275px;top:225px;font-size:12px;">时间</span>
<div style="left:899px;top:221px;width:1px;height:24px;background:#e2e2e2;"></div>
<span class="t" style="right:199px;top:225px;font-size:12px;">价格</span>
<div style="left:975px;top:221px;width:1px;height:24px;background:#e2e2e2;"></div>
<span class="t" style="right:123px;top:225px;font-size:12px;">库存费</span>
<div style="left:1051px;top:221px;width:1px;height:24px;background:#e2e2e2;"></div>
<span class="t" style="right:31px;top:225px;font-size:12px;">获利</span>
<svg style="left:65px;top:230px" width="6" height="8" viewBox="0 0 6 8"><path d="M1 7.500l3.500-6.500" stroke="#777" stroke-width="0.9"/></svg>
<div style="left:24px;top:245px;width:1121px;height:1px;background:#cfcfcf;"></div>
<svg width="0" height="0" style="left:0;top:0"><defs><linearGradient id="dg" x1="0" y1="0" x2="1" y2="1"><stop offset="0" stop-color="#ffffff"/><stop offset="0.6" stop-color="#fafafa"/><stop offset="1" stop-color="#dedede"/></linearGradient><radialGradient id="cb" cx="0.38" cy="0.32" r="0.75"><stop offset="0" stop-color="#6fc4ff"/><stop offset="0.55" stop-color="#1e8eea"/><stop offset="1" stop-color="#0a5cb8"/></radialGradient><radialGradient id="cr" cx="0.38" cy="0.32" r="0.75"><stop offset="0" stop-color="#ff8a5a"/><stop offset="0.55" stop-color="#ee4a12"/><stop offset="1" stop-color="#b83000"/></radialGradient></defs></svg>
<div style="left:24px;top:246px;width:1121px;height:659px;overflow:hidden;">
<div style="left:0;top:0px;width:1121px;height:20px;background:#fff;"></div>
<div style="left:0;top:20px;width:1121px;height:1px;background:#cfcfcf;"></div>
<span class="t" style="left:22px;top:2px;color:#000;font-size:12.6px;">16137800</span>
<div style="left:98px;top:0px;width:1px;height:21px;background:#cfcfcf;"></div>
<span class="t" style="right:857.5px;top:2px;color:#000;font-size:12.4px;">2022.04.08 11:43:23</span>
<div style="left:266px;top:0px;width:1px;height:21px;background:#cfcfcf;"></div>
<span class="t" style="right:781.5px;top:2px;color:#000;font-size:12.4px;">balance</span>
<div style="left:342px;top:0px;width:1px;height:21px;background:#cfcfcf;"></div>
<span class="t" style="right:97.5px;top:2px;color:#000;font-size:12.4px;">DB:20220408004</span>
<div style="left:1026px;top:0px;width:1px;height:21px;background:#cfcfcf;"></div>
<span class="t" style="right:4.5px;top:2px;color:#000;font-size:12.4px;">3 000.00</span>
<svg style="left:3px;top:2px" width="16" height="16" viewBox="0 0 16 16"><rect x="0.800" y="1.500" width="11" height="13" rx="1" fill="#fafafa" stroke="#5a5a5a" stroke-width="1"/><path d="M1.500 15h10" stroke="#c8c8c8" stroke-width="0.8"/><path d="M6.300 4.800l3.700 4h-2.100v2.600h-3.200v-2.600h-2.100z" fill="#2fc02f" stroke="#0a7a0a" stroke-width="0.7"/></svg>
<div style="left:0;top:21px;width:1121px;height:20px;background:#ececec;"></div>
<div style="left:0;top:41px;width:1121px;height:1px;background:#cfcfcf;"></div>
<span class="t" style="left:22px;top:23px;color:#000;font-size:12.6px;">16144527</span>
<div style="left:98px;top:21px;width:1px;height:21px;background:#cfcfcf;"></div>
<span class="t" style="right:857.5px;top:23px;color:#000;font-size:12.4px;">2022.04.08 13:54:15</span>
<div style="left:266px;top:21px;width:1px;height:21px;background:#cfcfcf;"></div>
<span class="t" style="right:781.5px;top:23px;color:#000;font-size:12.4px;">buy</span>
<div style="left:342px;top:21px;width:1px;height:21px;background:#cfcfcf;"></div>
<span class="t" style="right:721.5px;top:23px;color:#000;font-size:12.4px;">0.01</span>
<div style="left:402px;top:21px;width:1px;height:21px;background:#cfcfcf;"></div>
<span class="t" style="right:645.5px;top:23px;color:#000;font-size:12.4px;">u30usd</span>
<div style="left:478px;top:21px;width:1px;height:21px;background:#cfcfcf;"></div>
<span class="t" style="right:569.5px;top:23px;color:#000;font-size:12.4px;">34540.6</span>
<div style="left:554px;top:21px;width:1px;height:21px;background:#cfcfcf;"></div>
<span class="t" style="right:493.5px;top:23px;color:#000;font-size:12.4px;">0.0</span>
<div style="left:630px;top:21px;width:1px;height:21px;background:#cfcfcf;"></div>
<span class="t" style="right:417.5px;top:23px;color:#000;font-size:12.4px;">0.0</span>
<div style="left:706px;top:21px;width:1px;height:21px;background:#cfcfcf;"></div>
<span class="t" style="right:249.5px;top:23px;color:#000;font-size:12.4px;">2022.04.08 13:55:22</span>
<div style="left:874px;top:21px;width:1px;height:21px;background:#cfcfcf;"></div>
<span class="t" style="right:173.5px;top:23px;color:#000;font-size:12.4px;">34545.4</span>
<div style="left:950px;top:21px;width:1px;height:21px;background:#cfcfcf;"></div>
<span class="t" style="right:97.5px;top:23px;color:#000;font-size:12.4px;">0.00</span>
<div style="left:1026px;top:21px;width:1px;height:21px;background:#cfcfcf;"></div>
<span class="t" style="right:4.5px;top:23px;color:#000;font-size:12.4px;">0.48</span>
<svg style="left:3px;top:23px" width="16" height="16" viewBox="0 0 16 16"><path d="M0.900 1.500h7.600l3 3v10h-10.600z" fill="url(#dg)" stroke="#4a4a4a" stroke-width="1"/><path d="M8.500 1.500v3h3" fill="#fff" stroke="#4a4a4a" stroke-width="0.9"/><path d="M1 15h10" stroke="#c4c4c4" stroke-width="0.8"/><circle cx="10.800" cy="12.100" r="3.200" fill="url(#cb)" stroke="#0a58b8" stroke-width="0.5"/></svg>
<div style="left:0;top:42px;width:1121px;height:20px;background:#fff;"></div>
<div style="left:0;top:62px;width:1121px;height:1px;background:#cfcfcf;"></div>
<span class="t" style="left:22px;top:44px;color:#000;font-size:12.6px;">16152610</span>
<div style="left:98px;top:42px;width:1px;height:21px;background:#cfcfcf;"></div>
<span class="t" style="right:857.5px;top:44px;color:#000;font-size:12.4px;">2022.04.10 21:12:00</span>
<div style="left:266px;top:42px;width:1px;height:21px;background:#cfcfcf;"></div>
<span class="t" style="right:781.5px;top:44px;color:#000;font-size:12.4px;">sell</span>
<div style="left:342px;top:42px;width:1px;height:21px;background:#cfcfcf;"></div>
<span class="t" style="right:721.5px;top:44px;color:#000;font-size:12.4px;">0.01</span>
<div style="left:402px;top:42px;width:1px;height:21px;background:#cfcfcf;"></div>
<span class="t" style="right:645.5px;top:44px;color:#000;font-size:12.4px;">eurnzd</span>
<div style="left:478px;top:42px;width:1px;height:21px;background:#cfcfcf;"></div>
<span class="t" style="right:569.5px;top:44px;color:#000;font-size:12.4px;">1.59223</span>
<div style="left:554px;top:42px;width:1px;height:21px;background:#cfcfcf;"></div>
<span class="t" style="right:493.5px;top:44px;color:#000;font-size:12.4px;">0.00000</span>
<div style="left:630px;top:42px;width:1px;height:21px;background:#cfcfcf;"></div>
<span class="t" style="right:417.5px;top:44px;color:#000;font-size:12.4px;">0.00000</span>
<div style="left:706px;top:42px;width:1px;height:21px;background:#cfcfcf;"></div>
<span class="t" style="right:249.5px;top:44px;color:#000;font-size:12.4px;">2022.04.10 22:15:08</span>
<div style="left:874px;top:42px;width:1px;height:21px;background:#cfcfcf;"></div>
<span class="t" style="right:173.5px;top:44px;color:#000;font-size:12.4px;">1.59216</span>
<div style="left:950px;top:42px;width:1px;height:21px;background:#cfcfcf;"></div>
<span class="t" style="right:97.5px;top:44px;color:#000;font-size:12.4px;">0.00</span>
<div style="left:1026px;top:42px;width:1px;height:21px;background:#cfcfcf;"></div>
<span class="t" style="right:4.5px;top:44px;color:#000;font-size:12.4px;">0.05</span>
<svg style="left:3px;top:44px" width="16" height="16" viewBox="0 0 16 16"><path d="M0.900 1.500h7.600l3 3v10h-10.600z" fill="url(#dg)" stroke="#4a4a4a" stroke-width="1"/><path d="M8.500 1.500v3h3" fill="#fff" stroke="#4a4a4a" stroke-width="0.9"/><path d="M1 15h10" stroke="#c4c4c4" stroke-width="0.8"/><circle cx="10.800" cy="12.100" r="3.200" fill="url(#cr)" stroke="#b83000" stroke-width="0.5"/></svg>
<div style="left:0;top:63px;width:1121px;height:20px;background:#ececec;"></div>
<div style="left:0;top:83px;width:1121px;height:1px;background:#cfcfcf;"></div>
<span class="t" style="left:22px;top:65px;color:#000;font-size:12.6px;">16152810</span>
<div style="left:98px;top:63px;width:1px;height:21px;background:#cfcfcf;"></div>
<span class="t" style="right:857.5px;top:65px;color:#000;font-size:12.4px;">2022.04.10 21:12:27</span>
<div style="left:266px;top:63px;width:1px;height:21px;background:#cfcfcf;"></div>
<span class="t" style="right:781.5px;top:65px;color:#000;font-size:12.4px;">sell</span>
<div style="left:342px;top:63px;width:1px;height:21px;background:#cfcfcf;"></div>
<span class="t" style="right:721.5px;top:65px;color:#000;font-size:12.4px;">1.00</span>
<div style="left:402px;top:63px;width:1px;height:21px;background:#cfcfcf;"></div>
<span class="t" style="right:645.5px;top:65px;color:#000;font-size:12.4px;">eurnzd</span>
<div style="left:478px;top:63px;width:1px;height:21px;background:#cfcfcf;"></div>
<span class="t" style="right:569.5px;top:65px;color:#000;font-size:12.4px;">1.59206</span>
<div style="left:554px;top:63px;width:1px;height:21px;background:#cfcfcf;"></div>
<span class="t" style="right:493.5px;top:65px;color:#000;font-size:12.4px;">0.00000</span>
<div style="left:630px;top:63px;width:1px;height:21px;background:#cfcfcf;"></div>
<span class="t" style="right:417.5px;top:65px;color:#000;font-size:12.4px;">1.59050</span>
<div style="left:706px;top:63px;width:1px;height:21px;background:#cfcfcf;"></div>
<span class="t" style="right:249.5px;top:65px;color:#000;font-size:12.4px;">2022.04.10 22:27:27</span>
<div style="left:874px;top:63px;width:1px;height:21px;background:#cfcfcf;"></div>
<span class="t" style="right:173.5px;top:65px;color:#000;font-size:12.4px;">1.59195</span>
<div style="left:950px;top:63px;width:1px;height:21px;background:#cfcfcf;"></div>
<span class="t" style="right:97.5px;top:65px;color:#000;font-size:12.4px;">0.00</span>
<div style="left:1026px;top:63px;width:1px;height:21px;background:#cfcfcf;"></div>
<span class="t" style="right:4.5px;top:65px;color:#000;font-size:12.4px;">7.53</span>
<svg style="left:3px;top:65px" width="16" height="16" viewBox="0 0 16 16"><path d="M0.900 1.500h7.600l3 3v10h-10.600z" fill="url(#dg)" stroke="#4a4a4a" stroke-width="1"/><path d="M8.500 1.500v3h3" fill="#fff" stroke="#4a4a4a" stroke-width="0.9"/><path d="M1 15h10" stroke="#c4c4c4" stroke-width="0.8"/><circle cx="10.800" cy="12.100" r="3.200" fill="url(#cr)" stroke="#b83000" stroke-width="0.5"/></svg>
<div style="left:0;top:84px;width:1121px;height:20px;background:#fff;"></div>
<div style="left:0;top:104px;width:1121px;height:1px;background:#cfcfcf;"></div>
<span class="t" style="left:22px;top:86px;color:#000;font-size:12.6px;">16152821</span>
<div style="left:98px;top:84px;width:1px;height:21px;background:#cfcfcf;"></div>
<span class="t" style="right:857.5px;top:86px;color:#000;font-size:12.4px;">2022.04.10 21:12:43</span>
<div style="left:266px;top:84px;width:1px;height:21px;background:#cfcfcf;"></div>
<span class="t" style="right:781.5px;top:86px;color:#000;font-size:12.4px;">sell</span>
<div style="left:342px;top:84px;width:1px;height:21px;background:#cfcfcf;"></div>
<span class="t" style="right:721.5px;top:86px;color:#000;font-size:12.4px;">1.00</span>
<div style="left:402px;top:84px;width:1px;height:21px;background:#cfcfcf;"></div>
<span class="t" style="right:645.5px;top:86px;color:#000;font-size:12.4px;">eurnzd</span>
<div style="left:478px;top:84px;width:1px;height:21px;background:#cfcfcf;"></div>
<span class="t" style="right:569.5px;top:86px;color:#000;font-size:12.4px;">1.59235</span>
<div style="left:554px;top:84px;width:1px;height:21px;background:#cfcfcf;"></div>
<span class="t" style="right:493.5px;top:86px;color:#000;font-size:12.4px;">0.00000</span>
<div style="left:630px;top:84px;width:1px;height:21px;background:#cfcfcf;"></div>
<span class="t" style="right:417.5px;top:86px;color:#000;font-size:12.4px;">1.59000</span>
<div style="left:706px;top:84px;width:1px;height:21px;background:#cfcfcf;"></div>
<span class="t" style="right:249.5px;top:86px;color:#000;font-size:12.4px;">2022.04.10 22:24:55</span>
<div style="left:874px;top:84px;width:1px;height:21px;background:#cfcfcf;"></div>
<span class="t" style="right:173.5px;top:86px;color:#000;font-size:12.4px;">1.59209</span>
<div style="left:950px;top:84px;width:1px;height:21px;background:#cfcfcf;"></div>
<span class="t" style="right:97.5px;top:86px;color:#000;font-size:12.4px;">0.00</span>
<div style="left:1026px;top:84px;width:1px;height:21px;background:#cfcfcf;"></div>
<span class="t" style="right:4.5px;top:86px;color:#000;font-size:12.4px;">17.81</span>
<svg style="left:3px;top:86px" width="16" height="16" viewBox="0 0 16 16"><path d="M0.900 1.500h7.600l3 3v10h-10.600z" fill="url(#dg)" stroke="#4a4a4a" stroke-width="1"/><path d="M8.500 1.500v3h3" fill="#fff" stroke="#4a4a4a" stroke-width="0.9"/><path d="M1 15h10" stroke="#c4c4c4" stroke-width="0.8"/><circle cx="10.800" cy="12.100" r="3.200" fill="url(#cr)" stroke="#b83000" stroke-width="0.5"/></svg>
<div style="left:0;top:105px;width:1121px;height:20px;background:#ececec;"></div>
<div style="left:0;top:125px;width:1121px;height:1px;background:#cfcfcf;"></div>
<span class="t" style="left:22px;top:107px;color:#000;font-size:12.6px;">16152826</span>
<div style="left:98px;top:105px;width:1px;height:21px;background:#cfcfcf;"></div>
<span class="t" style="right:857.5px;top:107px;color:#000;font-size:12.4px;">2022.04.10 21:12:52</span>
<div style="left:266px;top:105px;width:1px;height:21px;background:#cfcfcf;"></div>
<span class="t" style="right:781.5px;top:107px;color:#000;font-size:12.4px;">sell</span>
<div style="left:342px;top:105px;width:1px;height:21px;background:#cfcfcf;"></div>
<span class="t" style="right:721.5px;top:107px;color:#000;font-size:12.4px;">1.00</span>
<div style="left:402px;top:105px;width:1px;height:21px;background:#cfcfcf;"></div>
<span class="t" style="right:645.5px;top:107px;color:#000;font-size:12.4px;">eurnzd</span>
<div style="left:478px;top:105px;width:1px;height:21px;background:#cfcfcf;"></div>
<span class="t" style="right:569.5px;top:107px;color:#000;font-size:12.4px;">1.59234</span>
<div style="left:554px;top:105px;width:1px;height:21px;background:#cfcfcf;"></div>
<span class="t" style="right:493.5px;top:107px;color:#000;font-size:12.4px;">0.00000</span>
<div style="left:630px;top:105px;width:1px;height:21px;background:#cfcfcf;"></div>
<span class="t" style="right:417.5px;top:107px;color:#000;font-size:12.4px;">1.59100</span>
<div style="left:706px;top:105px;width:1px;height:21px;background:#cfcfcf;"></div>
<span class="t" style="right:249.5px;top:107px;color:#000;font-size:12.4px;">2022.04.10 22:14:59</span>
<div style="left:874px;top:105px;width:1px;height:21px;background:#cfcfcf;"></div>
<span class="t" style="right:173.5px;top:107px;color:#000;font-size:12.4px;">1.59206</span>
<div style="left:950px;top:105px;width:1px;height:21px;background:#cfcfcf;"></div>
<span class="t" style="right:97.5px;top:107px;color:#000;font-size:12.4px;">0.00</span>
<div style="left:1026px;top:105px;width:1px;height:21px;background:#cfcfcf;"></div>
<span class="t" style="right:4.5px;top:107px;color:#000;font-size:12.4px;">19.18</span>
<svg style="left:3px;top:107px" width="16" height="16" viewBox="0 0 16 16"><path d="M0.900 1.500h7.600l3 3v10h-10.600z" fill="url(#dg)" stroke="#4a4a4a" stroke-width="1"/><path d="M8.500 1.500v3h3" fill="#fff" stroke="#4a4a4a" stroke-width="0.9"/><path d="M1 15h10" stroke="#c4c4c4" stroke-width="0.8"/><circle cx="10.800" cy="12.100" r="3.200" fill="url(#cr)" stroke="#b83000" stroke-width="0.5"/></svg>
<div style="left:0;top:126px;width:1121px;height:20px;background:#fff;"></div>
<div style="left:0;top:146px;width:1121px;height:1px;background:#cfcfcf;"></div>
<span class="t" style="left:22px;top:128px;color:#000;font-size:12.6px;">16152827</span>
<div style="left:98px;top:126px;width:1px;height:21px;background:#cfcfcf;"></div>
<span class="t" style="right:857.5px;top:128px;color:#000;font-size:12.4px;">2022.04.10 21:12:59</span>
<div style="left:266px;top:126px;width:1px;height:21px;background:#cfcfcf;"></div>
<span class="t" style="right:781.5px;top:128px;color:#000;font-size:12.4px;">sell</span>
<div style="left:342px;top:126px;width:1px;height:21px;background:#cfcfcf;"></div>
<span class="t" style="right:721.5px;top:128px;color:#000;font-size:12.4px;">1.00</span>
<div style="left:402px;top:126px;width:1px;height:21px;background:#cfcfcf;"></div>
<span class="t" style="right:645.5px;top:128px;color:#000;font-size:12.4px;">eurnzd</span>
<div style="left:478px;top:126px;width:1px;height:21px;background:#cfcfcf;"></div>
<span class="t" style="right:569.5px;top:128px;color:#000;font-size:12.4px;">1.59231</span>
<div style="left:554px;top:126px;width:1px;height:21px;background:#cfcfcf;"></div>
<span class="t" style="right:493.5px;top:128px;color:#000;font-size:12.4px;">0.00000</span>
<div style="left:630px;top:126px;width:1px;height:21px;background:#cfcfcf;"></div>
<span class="t" style="right:417.5px;top:128px;color:#000;font-size:12.4px;">1.58880</span>
<div style="left:706px;top:126px;width:1px;height:21px;background:#cfcfcf;"></div>
<span class="t" style="right:249.5px;top:128px;color:#000;font-size:12.4px;">2022.04.10 22:06:05</span>
<div style="left:874px;top:126px;width:1px;height:21px;background:#cfcfcf;"></div>
<span class="t" style="right:173.5px;top:128px;color:#000;font-size:12.4px;">1.59202</span>
<div style="left:950px;top:126px;width:1px;height:21px;background:#cfcfcf;"></div>
<span class="t" style="right:97.5px;top:128px;color:#000;font-size:12.4px;">0.00</span>
<div style="left:1026px;top:126px;width:1px;height:21px;background:#cfcfcf;"></div>
<span class="t" style="right:4.5px;top:128px;color:#000;font-size:12.4px;">19.88</span>
<svg style="left:3px;top:128px" width="16" height="16" viewBox="0 0 16 16"><path d="M0.900 1.500h7.600l3 3v10h-10.600z" fill="url(#dg)" stroke="#4a4a4a" stroke-width="1"/><path d="M8.500 1.500v3h3" fill="#fff" stroke="#4a4a4a" stroke-width="0.9"/><path d="M1 15h10" stroke="#c4c4c4" stroke-width="0.8"/><circle cx="10.800" cy="12.100" r="3.200" fill="url(#cr)" stroke="#b83000" stroke-width="0.5"/></svg>
<div style="left:0;top:147px;width:1121px;height:20px;background:#ececec;"></div>
<div style="left:0;top:167px;width:1121px;height:1px;background:#cfcfcf;"></div>
<span class="t" style="left:22px;top:149px;color:#000;font-size:12.6px;">16153030</span>
<div style="left:98px;top:147px;width:1px;height:21px;background:#cfcfcf;"></div>
<span class="t" style="right:857.5px;top:149px;color:#000;font-size:12.4px;">2022.04.10 21:13:20</span>
<div style="left:266px;top:147px;width:1px;height:21px;background:#cfcfcf;"></div>
<span class="t" style="right:781.5px;top:149px;color:#000;font-size:12.4px;">sell</span>
<div style="left:342px;top:147px;width:1px;height:21px;background:#cfcfcf;"></div>
<span class="t" style="right:721.5px;top:149px;color:#000;font-size:12.4px;">1.00</span>
<div style="left:402px;top:147px;width:1px;height:21px;background:#cfcfcf;"></div>
<span class="t" style="right:645.5px;top:149px;color:#000;font-size:12.4px;">eurnzd</span>
<div style="left:478px;top:147px;width:1px;height:21px;background:#cfcfcf;"></div>
<span class="t" style="right:569.5px;top:149px;color:#000;font-size:12.4px;">1.59231</span>
<div style="left:554px;top:147px;width:1px;height:21px;background:#cfcfcf;"></div>
<span class="t" style="right:493.5px;top:149px;color:#000;font-size:12.4px;">0.00000</span>
<div style="left:630px;top:147px;width:1px;height:21px;background:#cfcfcf;"></div>
<span class="t" style="right:417.5px;top:149px;color:#000;font-size:12.4px;">1.58800</span>
<div style="left:706px;top:147px;width:1px;height:21px;background:#cfcfcf;"></div>
<span class="t" style="right:249.5px;top:149px;color:#000;font-size:12.4px;">2022.04.10 22:04:24</span>
<div style="left:874px;top:147px;width:1px;height:21px;background:#cfcfcf;"></div>
<span class="t" style="right:173.5px;top:149px;color:#000;font-size:12.4px;">1.59206</span>
<div style="left:950px;top:147px;width:1px;height:21px;background:#cfcfcf;"></div>
<span class="t" style="right:97.5px;top:149px;color:#000;font-size:12.4px;">0.00</span>
<div style="left:1026px;top:147px;width:1px;height:21px;background:#cfcfcf;"></div>
<span class="t" style="right:4.5px;top:149px;color:#000;font-size:12.4px;">17.14</span>
<svg style="left:3px;top:149px" width="16" height="16" viewBox="0 0 16 16"><path d="M0.900 1.500h7.600l3 3v10h-10.600z" fill="url(#dg)" stroke="#4a4a4a" stroke-width="1"/><path d="M8.500 1.500v3h3" fill="#fff" stroke="#4a4a4a" stroke-width="0.9"/><path d="M1 15h10" stroke="#c4c4c4" stroke-width="0.8"/><circle cx="10.800" cy="12.100" r="3.200" fill="url(#cr)" stroke="#b83000" stroke-width="0.5"/></svg>
<div style="left:0;top:168px;width:1121px;height:20px;background:#fff;"></div>
<div style="left:0;top:188px;width:1121px;height:1px;background:#cfcfcf;"></div>
<span class="t" style="left:22px;top:170px;color:#000;font-size:12.6px;">16154096</span>
<div style="left:98px;top:168px;width:1px;height:21px;background:#cfcfcf;"></div>
<span class="t" style="right:857.5px;top:170px;color:#000;font-size:12.4px;">2022.04.10 21:35:53</span>
<div style="left:266px;top:168px;width:1px;height:21px;background:#cfcfcf;"></div>
<span class="t" style="right:781.5px;top:170px;color:#000;font-size:12.4px;">sell</span>
<div style="left:342px;top:168px;width:1px;height:21px;background:#cfcfcf;"></div>
<span class="t" style="right:721.5px;top:170px;color:#000;font-size:12.4px;">1.00</span>
<div style="left:402px;top:168px;width:1px;height:21px;background:#cfcfcf;"></div>
<span class="t" style="right:645.5px;top:170px;color:#000;font-size:12.4px;">eurnzd</span>
<div style="left:478px;top:168px;width:1px;height:21px;background:#cfcfcf;"></div>
<span class="t" style="right:569.5px;top:170px;color:#000;font-size:12.4px;">1.59253</span>
<div style="left:554px;top:168px;width:1px;height:21px;background:#cfcfcf;"></div>
<span class="t" style="right:493.5px;top:170px;color:#000;font-size:12.4px;">0.00000</span>
<div style="left:630px;top:168px;width:1px;height:21px;background:#cfcfcf;"></div>
<span class="t" style="right:417.5px;top:170px;color:#000;font-size:12.4px;">1.59000</span>
<div style="left:706px;top:168px;width:1px;height:21px;background:#cfcfcf;"></div>
<span class="t" style="right:249.5px;top:170px;color:#000;font-size:12.4px;">2022.04.10 22:02:19</span>
<div style="left:874px;top:168px;width:1px;height:21px;background:#cfcfcf;"></div>
<span class="t" style="right:173.5px;top:170px;color:#000;font-size:12.4px;">1.59214</span>
<div style="left:950px;top:168px;width:1px;height:21px;background:#cfcfcf;"></div>
<span class="t" style="right:97.5px;top:170px;color:#000;font-size:12.4px;">0.00</span>
<div style="left:1026px;top:168px;width:1px;height:21px;background:#cfcfcf;"></div>
<span class="t" style="right:4.5px;top:170px;color:#000;font-size:12.4px;">26.74</span>
<svg style="left:3px;top:170px" width="16" height="16" viewBox="0 0 16 16"><path d="M0.900 1.500h7.600l3 3v10h-10.600z" fill="url(#dg)" stroke="#4a4a4a" stroke-width="1"/><path d="M8.500 1.500v3h3" fill="#fff" stroke="#4a4a4a" stroke-width="0.9"/><path d="M1 15h10" stroke="#c4c4c4" stroke-width="0.8"/><circle cx="10.800" cy="12.100" r="3.200" fill="url(#cr)" stroke="#b83000" stroke-width="0.5"/></svg>
<div style="left:0;top:189px;width:1121px;height:20px;background:#ececec;"></div>
<div style="left:0;top:209px;width:1121px;height:1px;background:#cfcfcf;"></div>
<div style="left:632px;top:189px;width:73px;height:19px;background:#5cec5c;"></div>
<span class="t" style="left:22px;top:191px;color:#000;font-size:12.6px;">16191052</span>
<div style="left:98px;top:189px;width:1px;height:21px;background:#cfcfcf;"></div>
<span class="t" style="right:857.5px;top:191px;color:#000;font-size:12.4px;">2022.04.11 21:17:54</span>
<div style="left:266px;top:189px;width:1px;height:21px;background:#cfcfcf;"></div>
<span class="t" style="right:781.5px;top:191px;color:#000;font-size:12.4px;">buy</span>
<div style="left:342px;top:189px;width:1px;height:21px;background:#cfcfcf;"></div>
<span class="t" style="right:721.5px;top:191px;color:#000;font-size:12.4px;">1.00</span>
<div style="left:402px;top:189px;width:1px;height:21px;background:#cfcfcf;"></div>
<span class="t" style="right:645.5px;top:191px;color:#000;font-size:12.4px;">gbpnzd</span>
<div style="left:478px;top:189px;width:1px;height:21px;background:#cfcfcf;"></div>
<span class="t" style="right:569.5px;top:191px;color:#000;font-size:12.4px;">1.90717</span>
<div style="left:554px;top:189px;width:1px;height:21px;background:#cfcfcf;"></div>
<span class="t" style="right:493.5px;top:191px;color:#000;font-size:12.4px;">0.00000</span>
<div style="left:630px;top:189px;width:1px;height:21px;background:#cfcfcf;"></div>
<span class="t" style="right:417.5px;top:191px;color:#000;font-size:12.4px;">1.90880</span>
<div style="left:706px;top:189px;width:1px;height:21px;background:#cfcfcf;"></div>
<span class="t" style="right:249.5px;top:191px;color:#000;font-size:12.4px;">2022.04.11 21:55:16</span>
<div style="left:874px;top:189px;width:1px;height:21px;background:#cfcfcf;"></div>
<span class="t" style="right:173.5px;top:191px;color:#000;font-size:12.4px;">1.90894</span>
<div style="left:950px;top:189px;width:1px;height:21px;background:#cfcfcf;"></div>
<span class="t" style="right:97.5px;top:191px;color:#000;font-size:12.4px;">0.00</span>
<div style="left:1026px;top:189px;width:1px;height:21px;background:#cfcfcf;"></div>
<span class="t" style="right:4.5px;top:191px;color:#000;font-size:12.4px;">120.73</span>
<svg style="left:3px;top:191px" width="16" height="16" viewBox="0 0 16 16"><path d="M0.900 1.500h7.600l3 3v10h-10.600z" fill="url(#dg)" stroke="#4a4a4a" stroke-width="1"/><path d="M8.500 1.500v3h3" fill="#fff" stroke="#4a4a4a" stroke-width="0.9"/><path d="M1 15h10" stroke="#c4c4c4" stroke-width="0.8"/><circle cx="10.800" cy="12.100" r="3.200" fill="url(#cb)" stroke="#0a58b8" stroke-width="0.5"/></svg>
<div style="left:0;top:210px;width:1121px;height:20px;background:#fff;"></div>
<div style="left:0;top:230px;width:1121px;height:1px;background:#cfcfcf;"></div>
<div style="left:632px;top:210px;width:73px;height:19px;background:#5cec5c;"></div>
<span class="t" style="left:22px;top:212px;color:#000;font-size:12.6px;">16191075</span>
<div style="left:98px;top:210px;width:1px;height:21px;background:#cfcfcf;"></div>
<span class="t" style="right:857.5px;top:212px;color:#000;font-size:12.4px;">2022.04.11 21:17:53</span>
<div style="left:266px;top:210px;width:1px;height:21px;background:#cfcfcf;"></div>
<span class="t" style="right:781.5px;top:212px;color:#000;font-size:12.4px;">buy</span>
<div style="left:342px;top:210px;width:1px;height:21px;background:#cfcfcf;"></div>
<span class="t" style="right:721.5px;top:212px;color:#000;font-size:12.4px;">1.00</span>
<div style="left:402px;top:210px;width:1px;height:21px;background:#cfcfcf;"></div>
<span class="t" style="right:645.5px;top:212px;color:#000;font-size:12.4px;">gbpnzd</span>
<div style="left:478px;top:210px;width:1px;height:21px;background:#cfcfcf;"></div>
<span class="t" style="right:569.5px;top:212px;color:#000;font-size:12.4px;">1.90727</span>
<div style="left:554px;top:210px;width:1px;height:21px;background:#cfcfcf;"></div>
<span class="t" style="right:493.5px;top:212px;color:#000;font-size:12.4px;">0.00000</span>
<div style="left:630px;top:210px;width:1px;height:21px;background:#cfcfcf;"></div>
<span class="t" style="right:417.5px;top:212px;color:#000;font-size:12.4px;">1.90850</span>
<div style="left:706px;top:210px;width:1px;height:21px;background:#cfcfcf;"></div>
<span class="t" style="right:249.5px;top:212px;color:#000;font-size:12.4px;">2022.04.11 21:40:05</span>
<div style="left:874px;top:210px;width:1px;height:21px;background:#cfcfcf;"></div>
<span class="t" style="right:173.5px;top:212px;color:#000;font-size:12.4px;">1.90909</span>
<div style="left:950px;top:210px;width:1px;height:21px;background:#cfcfcf;"></div>
<span class="t" style="right:97.5px;top:212px;color:#000;font-size:12.4px;">0.00</span>
<div style="left:1026px;top:210px;width:1px;height:21px;background:#cfcfcf;"></div>
<span class="t" style="right:4.5px;top:212px;color:#000;font-size:12.4px;">124.14</span>
<svg style="left:3px;top:212px" width="16" height="16" viewBox="0 0 16 16"><path d="M0.900 1.500h7.600l3 3v10h-10.600z" fill="url(#dg)" stroke="#4a4a4a" stroke-width="1"/><path d="M8.500 1.500v3h3" fill="#fff" stroke="#4a4a4a" stroke-width="0.9"/><path d="M1 15h10" stroke="#c4c4c4" stroke-width="0.8"/><circle cx="10.800" cy="12.100" r="3.200" fill="url(#cb)" stroke="#0a58b8" stroke-width="0.5"/></svg>
<div style="left:0;top:231px;width:1121px;height:20px;background:#ececec;"></div>
<div style="left:0;top:251px;width:1121px;height:1px;background:#cfcfcf;"></div>
<span class="t" style="left:22px;top:233px;color:#000;font-size:12.6px;">16191112</span>
<div style="left:98px;top:231px;width:1px;height:21px;background:#cfcfcf;"></div>
<span class="t" style="right:857.5px;top:233px;color:#000;font-size:12.4px;">2022.04.11 21:18:15</span>
<div style="left:266px;top:231px;width:1px;height:21px;background:#cfcfcf;"></div>
<span class="t" style="right:781.5px;top:233px;color:#000;font-size:12.4px;">buy</span>
<div style="left:342px;top:231px;width:1px;height:21px;background:#cfcfcf;"></div>
<span class="t" style="right:721.5px;top:233px;color:#000;font-size:12.4px;">0.01</span>
<div style="left:402px;top:231px;width:1px;height:21px;background:#cfcfcf;"></div>
<span class="t" style="right:645.5px;top:233px;color:#000;font-size:12.4px;">eurnzd</span>
<div style="left:478px;top:231px;width:1px;height:21px;background:#cfcfcf;"></div>
<span class="t" style="right:569.5px;top:233px;color:#000;font-size:12.4px;">1.59483</span>
<div style="left:554px;top:231px;width:1px;height:21px;background:#cfcfcf;"></div>
<span class="t" style="right:493.5px;top:233px;color:#000;font-size:12.4px;">0.00000</span>
<div style="left:630px;top:231px;width:1px;height:21px;background:#cfcfcf;"></div>
<span class="t" style="right:417.5px;top:233px;color:#000;font-size:12.4px;">0.00000</span>
<div style="left:706px;top:231px;width:1px;height:21px;background:#cfcfcf;"></div>
<span class="t" style="right:249.5px;top:233px;color:#000;font-size:12.4px;">2022.04.11 21:55:45</span>
<div style="left:874px;top:231px;width:1px;height:21px;background:#cfcfcf;"></div>
<span class="t" style="right:173.5px;top:233px;color:#000;font-size:12.4px;">1.59449</span>
<div style="left:950px;top:231px;width:1px;height:21px;background:#cfcfcf;"></div>
<span class="t" style="right:97.5px;top:233px;color:#000;font-size:12.4px;">0.00</span>
<div style="left:1026px;top:231px;width:1px;height:21px;background:#cfcfcf;"></div>
<span class="t" style="right:4.5px;top:233px;color:#000;font-size:12.4px;">-0.23</span>
<svg style="left:3px;top:233px" width="16" height="16" viewBox="0 0 16 16"><path d="M0.900 1.500h7.600l3 3v10h-10.600z" fill="url(#dg)" stroke="#4a4a4a" stroke-width="1"/><path d="M8.500 1.500v3h3" fill="#fff" stroke="#4a4a4a" stroke-width="0.9"/><path d="M1 15h10" stroke="#c4c4c4" stroke-width="0.8"/><circle cx="10.800" cy="12.100" r="3.200" fill="url(#cb)" stroke="#0a58b8" stroke-width="0.5"/></svg>
<div style="left:0;top:252px;width:1121px;height:20px;background:#fff;"></div>
<div style="left:0;top:272px;width:1121px;height:1px;background:#cfcfcf;"></div>
<div style="left:632px;top:252px;width:73px;height:19px;background:#5cec5c;"></div>
<span class="t" style="left:22px;top:254px;color:#000;font-size:12.6px;">16191138</span>
<div style="left:98px;top:252px;width:1px;height:21px;background:#cfcfcf;"></div>
<span class="t" style="right:857.5px;top:254px;color:#000;font-size:12.4px;">2022.04.11 21:18:57</span>
<div style="left:266px;top:252px;width:1px;height:21px;background:#cfcfcf;"></div>
<span class="t" style="right:781.5px;top:254px;color:#000;font-size:12.4px;">buy</span>
<div style="left:342px;top:252px;width:1px;height:21px;background:#cfcfcf;"></div>
<span class="t" style="right:721.5px;top:254px;color:#000;font-size:12.4px;">1.00</span>
<div style="left:402px;top:252px;width:1px;height:21px;background:#cfcfcf;"></div>
<span class="t" style="right:645.5px;top:254px;color:#000;font-size:12.4px;">gbpnzd</span>
<div style="left:478px;top:252px;width:1px;height:21px;background:#cfcfcf;"></div>
<span class="t" style="right:569.5px;top:254px;color:#000;font-size:12.4px;">1.90727</span>
<div style="left:554px;top:252px;width:1px;height:21px;background:#cfcfcf;"></div>
<span class="t" style="right:493.5px;top:254px;color:#000;font-size:12.4px;">0.00000</span>
<div style="left:630px;top:252px;width:1px;height:21px;background:#cfcfcf;"></div>
<span class="t" style="right:417.5px;top:254px;color:#000;font-size:12.4px;">1.90860</span>
<div style="left:706px;top:252px;width:1px;height:21px;background:#cfcfcf;"></div>
<span class="t" style="right:249.5px;top:254px;color:#000;font-size:12.4px;">2022.04.11 21:40:05</span>
<div style="left:874px;top:252px;width:1px;height:21px;background:#cfcfcf;"></div>
<span class="t" style="right:173.5px;top:254px;color:#000;font-size:12.4px;">1.90909</span>
<div style="left:950px;top:252px;width:1px;height:21px;background:#cfcfcf;"></div>
<span class="t" style="right:97.5px;top:254px;color:#000;font-size:12.4px;">0.00</span>
<div style="left:1026px;top:252px;width:1px;height:21px;background:#cfcfcf;"></div>
<span class="t" style="right:4.5px;top:254px;color:#000;font-size:12.4px;">124.14</span>
<svg style="left:3px;top:254px" width="16" height="16" viewBox="0 0 16 16"><path d="M0.900 1.500h7.600l3 3v10h-10.600z" fill="url(#dg)" stroke="#4a4a4a" stroke-width="1"/><path d="M8.500 1.500v3h3" fill="#fff" stroke="#4a4a4a" stroke-width="0.9"/><path d="M1 15h10" stroke="#c4c4c4" stroke-width="0.8"/><circle cx="10.800" cy="12.100" r="3.200" fill="url(#cb)" stroke="#0a58b8" stroke-width="0.5"/></svg>
<div style="left:0;top:273px;width:1121px;height:20px;background:#ececec;"></div>
<div style="left:0;top:293px;width:1121px;height:1px;background:#cfcfcf;"></div>
<span class="t" style="left:22px;top:275px;color:#000;font-size:12.6px;">16191214</span>
<div style="left:98px;top:273px;width:1px;height:21px;background:#cfcfcf;"></div>
<span class="t" style="right:857.5px;top:275px;color:#000;font-size:12.4px;">2022.04.11 21:31:24</span>
<div style="left:266px;top:273px;width:1px;height:21px;background:#cfcfcf;"></div>
<span class="t" style="right:781.5px;top:275px;color:#000;font-size:12.4px;">buy limit</span>
<div style="left:342px;top:273px;width:1px;height:21px;background:#cfcfcf;"></div>
<span class="t" style="right:721.5px;top:275px;color:#000;font-size:12.4px;">1.00</span>
<div style="left:402px;top:273px;width:1px;height:21px;background:#cfcfcf;"></div>
<span class="t" style="right:645.5px;top:275px;color:#000;font-size:12.4px;">gbpaud</span>
<div style="left:478px;top:273px;width:1px;height:21px;background:#cfcfcf;"></div>
<span class="t" style="right:569.5px;top:275px;color:#000;font-size:12.4px;">1.75330</span>
<div style="left:554px;top:273px;width:1px;height:21px;background:#cfcfcf;"></div>
<span class="t" style="right:493.5px;top:275px;color:#000;font-size:12.4px;">0.00000</span>
<div style="left:630px;top:273px;width:1px;height:21px;background:#cfcfcf;"></div>
<span class="t" style="right:417.5px;top:275px;color:#000;font-size:12.4px;">1.75593</span>
<div style="left:706px;top:273px;width:1px;height:21px;background:#cfcfcf;"></div>
<span class="t" style="right:249.5px;top:275px;color:#000;font-size:12.4px;">2022.04.11 21:59:27</span>
<div style="left:874px;top:273px;width:1px;height:21px;background:#cfcfcf;"></div>
<span class="t" style="right:173.5px;top:275px;color:#000;font-size:12.4px;">1.75693</span>
<div style="left:950px;top:273px;width:1px;height:21px;background:#cfcfcf;"></div>
<div style="left:1026px;top:273px;width:1px;height:21px;background:#cfcfcf;"></div>
<svg style="left:3px;top:275px" width="16" height="16" viewBox="0 0 16 16"><path d="M0.900 1.500h7.600l3 3v10h-10.600z" fill="url(#dg)" stroke="#4a4a4a" stroke-width="1"/><path d="M8.500 1.500v3h3" fill="#fff" stroke="#4a4a4a" stroke-width="0.9"/><path d="M1 15h10" stroke="#c4c4c4" stroke-width="0.8"/><circle cx="10.800" cy="12.100" r="3.200" fill="url(#cb)" stroke="#0a58b8" stroke-width="0.5"/></svg>
<div style="left:0;top:294px;width:1121px;height:20px;background:#fff;"></div>
<div style="left:0;top:314px;width:1121px;height:1px;background:#cfcfcf;"></div>
<span class="t" style="left:22px;top:296px;color:#000;font-size:12.6px;">16191216</span>
<div style="left:98px;top:294px;width:1px;height:21px;background:#cfcfcf;"></div>
<span class="t" style="right:857.5px;top:296px;color:#000;font-size:12.4px;">2022.04.11 21:37:41</span>
<div style="left:266px;top:294px;width:1px;height:21px;background:#cfcfcf;"></div>
<span class="t" style="right:781.5px;top:296px;color:#000;font-size:12.4px;">buy limit</span>
<div style="left:342px;top:294px;width:1px;height:21px;background:#cfcfcf;"></div>
<span class="t" style="right:721.5px;top:296px;color:#000;font-size:12.4px;">1.00</span>
<div style="left:402px;top:294px;width:1px;height:21px;background:#cfcfcf;"></div>
<span class="t" style="right:645.5px;top:296px;color:#000;font-size:12.4px;">gbpaud</span>
<div style="left:478px;top:294px;width:1px;height:21px;background:#cfcfcf;"></div>
<span class="t" style="right:569.5px;top:296px;color:#000;font-size:12.4px;">1.75350</span>
<div style="left:554px;top:294px;width:1px;height:21px;background:#cfcfcf;"></div>
<span class="t" style="right:493.5px;top:296px;color:#000;font-size:12.4px;">0.00000</span>
<div style="left:630px;top:294px;width:1px;height:21px;background:#cfcfcf;"></div>
<span class="t" style="right:417.5px;top:296px;color:#000;font-size:12.4px;">1.75584</span>
<div style="left:706px;top:294px;width:1px;height:21px;background:#cfcfcf;"></div>
<span class="t" style="right:249.5px;top:296px;color:#000;font-size:12.4px;">2022.04.11 22:00:10</span>
<div style="left:874px;top:294px;width:1px;height:21px;background:#cfcfcf;"></div>
<span class="t" style="right:173.5px;top:296px;color:#000;font-size:12.4px;">1.75692</span>
<div style="left:950px;top:294px;width:1px;height:21px;background:#cfcfcf;"></div>
<div style="left:1026px;top:294px;width:1px;height:21px;background:#cfcfcf;"></div>
<svg style="left:3px;top:296px" width="16" height="16" viewBox="0 0 16 16"><path d="M0.900 1.500h7.600l3 3v10h-10.600z" fill="url(#dg)" stroke="#4a4a4a" stroke-width="1"/><path d="M8.500 1.500v3h3" fill="#fff" stroke="#4a4a4a" stroke-width="0.9"/><path d="M1 15h10" stroke="#c4c4c4" stroke-width="0.8"/><circle cx="10.800" cy="12.100" r="3.200" fill="url(#cb)" stroke="#0a58b8" stroke-width="0.5"/></svg>
<div style="left:0;top:315px;width:1121px;height:20px;background:#ececec;"></div>
<div style="left:0;top:335px;width:1121px;height:1px;background:#cfcfcf;"></div>
<span class="t" style="left:22px;top:317px;color:#000;font-size:12.6px;">16191235</span>
<div style="left:98px;top:315px;width:1px;height:21px;background:#cfcfcf;"></div>
<span class="t" style="right:857.5px;top:317px;color:#000;font-size:12.4px;">2022.04.11 21:50:16</span>
<div style="left:266px;top:315px;width:1px;height:21px;background:#cfcfcf;"></div>
<span class="t" style="right:781.5px;top:317px;color:#000;font-size:12.4px;">buy limit</span>
<div style="left:342px;top:315px;width:1px;height:21px;background:#cfcfcf;"></div>
<span class="t" style="right:721.5px;top:317px;color:#000;font-size:12.4px;">1.00</span>
<div style="left:402px;top:315px;width:1px;height:21px;background:#cfcfcf;"></div>
<span class="t" style="right:645.5px;top:317px;color:#000;font-size:12.4px;">gbpnzd</span>
<div style="left:478px;top:315px;width:1px;height:21px;background:#cfcfcf;"></div>
<span class="t" style="right:569.5px;top:317px;color:#000;font-size:12.4px;">1.90720</span>
<div style="left:554px;top:315px;width:1px;height:21px;background:#cfcfcf;"></div>
<span class="t" style="right:493.5px;top:317px;color:#000;font-size:12.4px;">0.00000</span>
<div style="left:630px;top:315px;width:1px;height:21px;background:#cfcfcf;"></div>
<span class="t" style="right:417.5px;top:317px;color:#000;font-size:12.4px;">1.90850</span>
<div style="left:706px;top:315px;width:1px;height:21px;background:#cfcfcf;"></div>
<span class="t" style="right:249.5px;top:317px;color:#000;font-size:12.4px;">2022.04.11 22:00:13</span>
<div style="left:874px;top:315px;width:1px;height:21px;background:#cfcfcf;"></div>
<span class="t" style="right:173.5px;top:317px;color:#000;font-size:12.4px;">1.90947</span>
<div style="left:950px;top:315px;width:1px;height:21px;background:#cfcfcf;"></div>
<div style="left:1026px;top:315px;width:1px;height:21px;background:#cfcfcf;"></div>
<svg style="left:3px;top:317px" width="16" height="16" viewBox="0 0 16 16"><path d="M0.900 1.500h7.600l3 3v10h-10.600z" fill="url(#dg)" stroke="#4a4a4a" stroke-width="1"/><path d="M8.500 1.500v3h3" fill="#fff" stroke="#4a4a4a" stroke-width="0.9"/><path d="M1 15h10" stroke="#c4c4c4" stroke-width="0.8"/><circle cx="10.800" cy="12.100" r="3.200" fill="url(#cb)" stroke="#0a58b8" stroke-width="0.5"/></svg>
<div style="left:0;top:336px;width:1121px;height:20px;background:#0078d7;"></div>
<div style="left:0;top:356px;width:1121px;height:1px;background:#cfcfcf;"></div>
<span class="t" style="left:22px;top:338px;color:#fff;font-size:12.6px;">16191270</span>
<div style="left:98px;top:336px;width:1px;height:21px;background:#5ea8e6;"></div>
<span class="t" style="right:857.5px;top:338px;color:#fff;font-size:12.4px;">2022.04.11 21:53:48</span>
<div style="left:266px;top:336px;width:1px;height:21px;background:#5ea8e6;"></div>
<span class="t" style="right:781.5px;top:338px;color:#fff;font-size:12.4px;">buy limit</span>
<div style="left:342px;top:336px;width:1px;height:21px;background:#5ea8e6;"></div>
<span class="t" style="right:721.5px;top:338px;color:#fff;font-size:12.4px;">1.00</span>
<div style="left:402px;top:336px;width:1px;height:21px;background:#5ea8e6;"></div>
<span class="t" style="right:645.5px;top:338px;color:#fff;font-size:12.4px;">gbpnzd</span>
<div style="left:478px;top:336px;width:1px;height:21px;background:#5ea8e6;"></div>
<span class="t" style="right:569.5px;top:338px;color:#fff;font-size:12.4px;">1.90720</span>
<div style="left:554px;top:336px;width:1px;height:21px;background:#5ea8e6;"></div>
<span class="t" style="right:493.5px;top:338px;color:#fff;font-size:12.4px;">0.00000</span>
<div style="left:630px;top:336px;width:1px;height:21px;background:#5ea8e6;"></div>
<span class="t" style="right:417.5px;top:338px;color:#fff;font-size:12.4px;">1.90850</span>
<div style="left:706px;top:336px;width:1px;height:21px;background:#5ea8e6;"></div>
<span class="t" style="right:249.5px;top:338px;color:#fff;font-size:12.4px;">2022.04.11 22:00:16</span>
<div style="left:874px;top:336px;width:1px;height:21px;background:#5ea8e6;"></div>
<span class="t" style="right:173.5px;top:338px;color:#fff;font-size:12.4px;">1.90851</span>
<div style="left:950px;top:336px;width:1px;height:21px;background:#5ea8e6;"></div>
<div style="left:1026px;top:336px;width:1px;height:21px;background:#5ea8e6;"></div>
<svg style="left:3px;top:338px" width="16" height="16" viewBox="0 0 16 16"><path d="M0.900 1.500h7.600l3 3v10h-10.600z" fill="url(#dg)" stroke="#4a4a4a" stroke-width="1"/><path d="M8.500 1.500v3h3" fill="#fff" stroke="#4a4a4a" stroke-width="0.9"/><path d="M1 15h10" stroke="#c4c4c4" stroke-width="0.8"/><circle cx="10.800" cy="12.100" r="3.200" fill="url(#cb)" stroke="#0a58b8" stroke-width="0.5"/></svg>
<div style="left:0;top:357px;width:1121px;height:20px;background:#ececec;"></div>
<div style="left:0;top:377px;width:1121px;height:1px;background:#cfcfcf;"></div>
<span class="t" style="left:22px;top:359px;color:#000;font-size:12.6px;">16191295</span>
<div style="left:98px;top:357px;width:1px;height:21px;background:#cfcfcf;"></div>
<span class="t" style="right:857.5px;top:359px;color:#000;font-size:12.4px;">2022.04.11 21:54:51</span>
<div style="left:266px;top:357px;width:1px;height:21px;background:#cfcfcf;"></div>
<span class="t" style="right:781.5px;top:359px;color:#000;font-size:12.4px;">buy limit</span>
<div style="left:342px;top:357px;width:1px;height:21px;background:#cfcfcf;"></div>
<span class="t" style="right:721.5px;top:359px;color:#000;font-size:12.4px;">1.00</span>
<div style="left:402px;top:357px;width:1px;height:21px;background:#cfcfcf;"></div>
<span class="t" style="right:645.5px;top:359px;color:#000;font-size:12.4px;">gbpnzd</span>
<div style="left:478px;top:357px;width:1px;height:21px;background:#cfcfcf;"></div>
<span class="t" style="right:569.5px;top:359px;color:#000;font-size:12.4px;">1.90650</span>
<div style="left:554px;top:357px;width:1px;height:21px;background:#cfcfcf;"></div>
<span class="t" style="right:493.5px;top:359px;color:#000;font-size:12.4px;">0.00000</span>
<div style="left:630px;top:357px;width:1px;height:21px;background:#cfcfcf;"></div>
<span class="t" style="right:417.5px;top:359px;color:#000;font-size:12.4px;">1.90850</span>
<div style="left:706px;top:357px;width:1px;height:21px;background:#cfcfcf;"></div>
<span class="t" style="right:249.5px;top:359px;color:#000;font-size:12.4px;">2022.04.11 22:00:15</span>
<div style="left:874px;top:357px;width:1px;height:21px;background:#cfcfcf;"></div>
<span class="t" style="right:173.5px;top:359px;color:#000;font-size:12.4px;">1.90947</span>
<div style="left:950px;top:357px;width:1px;height:21px;background:#cfcfcf;"></div>
<div style="left:1026px;top:357px;width:1px;height:21px;background:#cfcfcf;"></div>
<svg style="left:3px;top:359px" width="16" height="16" viewBox="0 0 16 16"><path d="M0.900 1.500h7.600l3 3v10h-10.600z" fill="url(#dg)" stroke="#4a4a4a" stroke-width="1"/><path d="M8.500 1.500v3h3" fill="#fff" stroke="#4a4a4a" stroke-width="0.9"/><path d="M1 15h10" stroke="#c4c4c4" stroke-width="0.8"/><circle cx="10.800" cy="12.100" r="3.200" fill="url(#cb)" stroke="#0a58b8" stroke-width="0.5"/></svg>
<div style="left:0;top:378px;width:1121px;height:20px;background:#fff;"></div>
<div style="left:0;top:398px;width:1121px;height:1px;background:#cfcfcf;"></div>
<span class="t" style="left:22px;top:380px;color:#000;font-size:12.6px;">16222689</span>
<div style="left:98px;top:378px;width:1px;height:21px;background:#cfcfcf;"></div>
<span class="t" style="right:857.5px;top:380px;color:#000;font-size:12.4px;">2022.04.12 18:58:31</span>
<div style="left:266px;top:378px;width:1px;height:21px;background:#cfcfcf;"></div>
<span class="t" style="right:781.5px;top:380px;color:#000;font-size:12.4px;">buy limit</span>
<div style="left:342px;top:378px;width:1px;height:21px;background:#cfcfcf;"></div>
<span class="t" style="right:721.5px;top:380px;color:#000;font-size:12.4px;">1.00</span>
<div style="left:402px;top:378px;width:1px;height:21px;background:#cfcfcf;"></div>
<span class="t" style="right:645.5px;top:380px;color:#000;font-size:12.4px;">gbpnzd</span>
<div style="left:478px;top:378px;width:1px;height:21px;background:#cfcfcf;"></div>
<span class="t" style="right:569.5px;top:380px;color:#000;font-size:12.4px;">1.89301</span>
<div style="left:554px;top:378px;width:1px;height:21px;background:#cfcfcf;"></div>
<span class="t" style="right:493.5px;top:380px;color:#000;font-size:12.4px;">0.00000</span>
<div style="left:630px;top:378px;width:1px;height:21px;background:#cfcfcf;"></div>
<span class="t" style="right:417.5px;top:380px;color:#000;font-size:12.4px;">1.89438</span>
<div style="left:706px;top:378px;width:1px;height:21px;background:#cfcfcf;"></div>
<span class="t" style="right:249.5px;top:380px;color:#000;font-size:12.4px;">2022.04.12 18:59:59</span>
<div style="left:874px;top:378px;width:1px;height:21px;background:#cfcfcf;"></div>
<span class="t" style="right:173.5px;top:380px;color:#000;font-size:12.4px;">1.89423</span>
<div style="left:950px;top:378px;width:1px;height:21px;background:#cfcfcf;"></div>
<div style="left:1026px;top:378px;width:1px;height:21px;background:#cfcfcf;"></div>
<svg style="left:3px;top:380px" width="16" height="16" viewBox="0 0 16 16"><path d="M0.900 1.500h7.600l3 3v10h-10.600z" fill="url(#dg)" stroke="#4a4a4a" stroke-width="1"/><path d="M8.500 1.500v3h3" fill="#fff" stroke="#4a4a4a" stroke-width="0.9"/><path d="M1 15h10" stroke="#c4c4c4" stroke-width="0.8"/><circle cx="10.800" cy="12.100" r="3.200" fill="url(#cb)" stroke="#0a58b8" stroke-width="0.5"/></svg>
<div style="left:0;top:399px;width:1121px;height:20px;background:#ececec;"></div>
<div style="left:0;top:419px;width:1121px;height:1px;background:#cfcfcf;"></div>
<span class="t" style="left:22px;top:401px;color:#000;font-size:12.6px;">16222700</span>
<div style="left:98px;top:399px;width:1px;height:21px;background:#cfcfcf;"></div>
<span class="t" style="right:857.5px;top:401px;color:#000;font-size:12.4px;">2022.04.12 18:59:52</span>
<div style="left:266px;top:399px;width:1px;height:21px;background:#cfcfcf;"></div>
<span class="t" style="right:781.5px;top:401px;color:#000;font-size:12.4px;">buy limit</span>
<div style="left:342px;top:399px;width:1px;height:21px;background:#cfcfcf;"></div>
<span class="t" style="right:721.5px;top:401px;color:#000;font-size:12.4px;">1.00</span>
<div style="left:402px;top:399px;width:1px;height:21px;background:#cfcfcf;"></div>
<span class="t" style="right:645.5px;top:401px;color:#000;font-size:12.4px;">nzdusd</span>
<div style="left:478px;top:399px;width:1px;height:21px;background:#cfcfcf;"></div>
<span class="t" style="right:569.5px;top:401px;color:#000;font-size:12.4px;">0.68500</span>
<div style="left:554px;top:399px;width:1px;height:21px;background:#cfcfcf;"></div>
<span class="t" style="right:493.5px;top:401px;color:#000;font-size:12.4px;">0.00000</span>
<div style="left:630px;top:399px;width:1px;height:21px;background:#cfcfcf;"></div>
<span class="t" style="right:417.5px;top:401px;color:#000;font-size:12.4px;">0.68650</span>
<div style="left:706px;top:399px;width:1px;height:21px;background:#cfcfcf;"></div>
<span class="t" style="right:249.5px;top:401px;color:#000;font-size:12.4px;">2022.04.12 19:00:14</span>
<div style="left:874px;top:399px;width:1px;height:21px;background:#cfcfcf;"></div>
<span class="t" style="right:173.5px;top:401px;color:#000;font-size:12.4px;">0.68657</span>
<div style="left:950px;top:399px;width:1px;height:21px;background:#cfcfcf;"></div>
<div style="left:1026px;top:399px;width:1px;height:21px;background:#cfcfcf;"></div>
<svg style="left:3px;top:401px" width="16" height="16" viewBox="0 0 16 16"><path d="M0.900 1.500h7.600l3 3v10h-10.600z" fill="url(#dg)" stroke="#4a4a4a" stroke-width="1"/><path d="M8.500 1.500v3h3" fill="#fff" stroke="#4a4a4a" stroke-width="0.9"/><path d="M1 15h10" stroke="#c4c4c4" stroke-width="0.8"/><circle cx="10.800" cy="12.100" r="3.200" fill="url(#cb)" stroke="#0a58b8" stroke-width="0.5"/></svg>
<div style="left:0;top:420px;width:1121px;height:20px;background:#fff;"></div>
<div style="left:0;top:440px;width:1121px;height:1px;background:#cfcfcf;"></div>
<div style="left:632px;top:420px;width:73px;height:19px;background:#5cec5c;"></div>
<span class="t" style="left:22px;top:422px;color:#000;font-size:12.6px;">16223414</span>
<div style="left:98px;top:420px;width:1px;height:21px;background:#cfcfcf;"></div>
<span class="t" style="right:857.5px;top:422px;color:#000;font-size:12.4px;">2022.04.12 21:15:38</span>
<div style="left:266px;top:420px;width:1px;height:21px;background:#cfcfcf;"></div>
<span class="t" style="right:781.5px;top:422px;color:#000;font-size:12.4px;">buy</span>
<div style="left:342px;top:420px;width:1px;height:21px;background:#cfcfcf;"></div>
<span class="t" style="right:721.5px;top:422px;color:#000;font-size:12.4px;">0.01</span>
<div style="left:402px;top:420px;width:1px;height:21px;background:#cfcfcf;"></div>
<span class="t" style="right:645.5px;top:422px;color:#000;font-size:12.4px;">gbpnzd</span>
<div style="left:478px;top:420px;width:1px;height:21px;background:#cfcfcf;"></div>
<span class="t" style="right:569.5px;top:422px;color:#000;font-size:12.4px;">1.89686</span>
<div style="left:554px;top:420px;width:1px;height:21px;background:#cfcfcf;"></div>
<span class="t" style="right:493.5px;top:422px;color:#000;font-size:12.4px;">0.00000</span>
<div style="left:630px;top:420px;width:1px;height:21px;background:#cfcfcf;"></div>
<span class="t" style="right:417.5px;top:422px;color:#000;font-size:12.4px;">1.89710</span>
<div style="left:706px;top:420px;width:1px;height:21px;background:#cfcfcf;"></div>
<span class="t" style="right:249.5px;top:422px;color:#000;font-size:12.4px;">2022.04.12 21:29:50</span>
<div style="left:874px;top:420px;width:1px;height:21px;background:#cfcfcf;"></div>
<span class="t" style="right:173.5px;top:422px;color:#000;font-size:12.4px;">1.89719</span>
<div style="left:950px;top:420px;width:1px;height:21px;background:#cfcfcf;"></div>
<span class="t" style="right:97.5px;top:422px;color:#000;font-size:12.4px;">0.00</span>
<div style="left:1026px;top:420px;width:1px;height:21px;background:#cfcfcf;"></div>
<span class="t" style="right:4.5px;top:422px;color:#000;font-size:12.4px;">0.22</span>
<svg style="left:3px;top:422px" width="16" height="16" viewBox="0 0 16 16"><path d="M0.900 1.500h7.600l3 3v10h-10.600z" fill="url(#dg)" stroke="#4a4a4a" stroke-width="1"/><path d="M8.500 1.500v3h3" fill="#fff" stroke="#4a4a4a" stroke-width="0.9"/><path d="M1 15h10" stroke="#c4c4c4" stroke-width="0.8"/><circle cx="10.800" cy="12.100" r="3.200" fill="url(#cb)" stroke="#0a58b8" stroke-width="0.5"/></svg>
<div style="left:0;top:441px;width:1121px;height:20px;background:#ececec;"></div>
<div style="left:0;top:461px;width:1121px;height:1px;background:#cfcfcf;"></div>
<div style="left:632px;top:441px;width:73px;height:19px;background:#5cec5c;"></div>
<span class="t" style="left:22px;top:443px;color:#000;font-size:12.6px;">16223425</span>
<div style="left:98px;top:441px;width:1px;height:21px;background:#cfcfcf;"></div>
<span class="t" style="right:857.5px;top:443px;color:#000;font-size:12.4px;">2022.04.12 21:15:50</span>
<div style="left:266px;top:441px;width:1px;height:21px;background:#cfcfcf;"></div>
<span class="t" style="right:781.5px;top:443px;color:#000;font-size:12.4px;">buy</span>
<div style="left:342px;top:441px;width:1px;height:21px;background:#cfcfcf;"></div>
<span class="t" style="right:721.5px;top:443px;color:#000;font-size:12.4px;">1.00</span>
<div style="left:402px;top:441px;width:1px;height:21px;background:#cfcfcf;"></div>
<span class="t" style="right:645.5px;top:443px;color:#000;font-size:12.4px;">gbpnzd</span>
<div style="left:478px;top:441px;width:1px;height:21px;background:#cfcfcf;"></div>
<span class="t" style="right:569.5px;top:443px;color:#000;font-size:12.4px;">1.89686</span>
<div style="left:554px;top:441px;width:1px;height:21px;background:#cfcfcf;"></div>
<span class="t" style="right:493.5px;top:443px;color:#000;font-size:12.4px;">0.00000</span>
<div style="left:630px;top:441px;width:1px;height:21px;background:#cfcfcf;"></div>
<span class="t" style="right:417.5px;top:443px;color:#000;font-size:12.4px;">1.89700</span>
<div style="left:706px;top:441px;width:1px;height:21px;background:#cfcfcf;"></div>
<span class="t" style="right:249.5px;top:443px;color:#000;font-size:12.4px;">2022.04.12 21:28:59</span>
<div style="left:874px;top:441px;width:1px;height:21px;background:#cfcfcf;"></div>
<span class="t" style="right:173.5px;top:443px;color:#000;font-size:12.4px;">1.89714</span>
<div style="left:950px;top:441px;width:1px;height:21px;background:#cfcfcf;"></div>
<span class="t" style="right:97.5px;top:443px;color:#000;font-size:12.4px;">0.00</span>
<div style="left:1026px;top:441px;width:1px;height:21px;background:#cfcfcf;"></div>
<span class="t" style="right:4.5px;top:443px;color:#000;font-size:12.4px;">19.18</span>
<svg style="left:3px;top:443px" width="16" height="16" viewBox="0 0 16 16"><path d="M0.900 1.500h7.600l3 3v10h-10.600z" fill="url(#dg)" stroke="#4a4a4a" stroke-width="1"/><path d="M8.500 1.500v3h3" fill="#fff" stroke="#4a4a4a" stroke-width="0.9"/><path d="M1 15h10" stroke="#c4c4c4" stroke-width="0.8"/><circle cx="10.800" cy="12.100" r="3.200" fill="url(#cb)" stroke="#0a58b8" stroke-width="0.5"/></svg>
<div style="left:0;top:462px;width:1121px;height:20px;background:#fff;"></div>
<div style="left:0;top:482px;width:1121px;height:1px;background:#cfcfcf;"></div>
<div style="left:632px;top:462px;width:73px;height:19px;background:#5cec5c;"></div>
<span class="t" style="left:22px;top:464px;color:#000;font-size:12.6px;">16223479</span>
<div style="left:98px;top:462px;width:1px;height:21px;background:#cfcfcf;"></div>
<span class="t" style="right:857.5px;top:464px;color:#000;font-size:12.4px;">2022.04.12 21:16:06</span>
<div style="left:266px;top:462px;width:1px;height:21px;background:#cfcfcf;"></div>
<span class="t" style="right:781.5px;top:464px;color:#000;font-size:12.4px;">buy</span>
<div style="left:342px;top:462px;width:1px;height:21px;background:#cfcfcf;"></div>
<span class="t" style="right:721.5px;top:464px;color:#000;font-size:12.4px;">1.00</span>
<div style="left:402px;top:462px;width:1px;height:21px;background:#cfcfcf;"></div>
<span class="t" style="right:645.5px;top:464px;color:#000;font-size:12.4px;">gbpnzd</span>
<div style="left:478px;top:462px;width:1px;height:21px;background:#cfcfcf;"></div>
<span class="t" style="right:569.5px;top:464px;color:#000;font-size:12.4px;">1.89832</span>
<div style="left:554px;top:462px;width:1px;height:21px;background:#cfcfcf;"></div>
<span class="t" style="right:493.5px;top:464px;color:#000;font-size:12.4px;">0.00000</span>
<div style="left:630px;top:462px;width:1px;height:21px;background:#cfcfcf;"></div>
<span class="t" style="right:417.5px;top:464px;color:#000;font-size:12.4px;">1.89719</span>
<div style="left:706px;top:462px;width:1px;height:21px;background:#cfcfcf;"></div>
<span class="t" style="right:249.5px;top:464px;color:#000;font-size:12.4px;">2022.04.12 21:29:24</span>
<div style="left:874px;top:462px;width:1px;height:21px;background:#cfcfcf;"></div>
<span class="t" style="right:173.5px;top:464px;color:#000;font-size:12.4px;">1.89719</span>
<div style="left:950px;top:462px;width:1px;height:21px;background:#cfcfcf;"></div>
<span class="t" style="right:97.5px;top:464px;color:#000;font-size:12.4px;">0.00</span>
<div style="left:1026px;top:462px;width:1px;height:21px;background:#cfcfcf;"></div>
<span class="t" style="right:4.5px;top:464px;color:#000;font-size:12.4px;">-77.40</span>
<svg style="left:3px;top:464px" width="16" height="16" viewBox="0 0 16 16"><path d="M0.900 1.500h7.600l3 3v10h-10.600z" fill="url(#dg)" stroke="#4a4a4a" stroke-width="1"/><path d="M8.500 1.500v3h3" fill="#fff" stroke="#4a4a4a" stroke-width="0.9"/><path d="M1 15h10" stroke="#c4c4c4" stroke-width="0.8"/><circle cx="10.800" cy="12.100" r="3.200" fill="url(#cb)" stroke="#0a58b8" stroke-width="0.5"/></svg>
<div style="left:0;top:483px;width:1121px;height:20px;background:#ececec;"></div>
<div style="left:0;top:503px;width:1121px;height:1px;background:#cfcfcf;"></div>
<div style="left:632px;top:483px;width:73px;height:19px;background:#5cec5c;"></div>
<span class="t" style="left:22px;top:485px;color:#000;font-size:12.6px;">16223516</span>
<div style="left:98px;top:483px;width:1px;height:21px;background:#cfcfcf;"></div>
<span class="t" style="right:857.5px;top:485px;color:#000;font-size:12.4px;">2022.04.12 21:16:30</span>
<div style="left:266px;top:483px;width:1px;height:21px;background:#cfcfcf;"></div>
<span class="t" style="right:781.5px;top:485px;color:#000;font-size:12.4px;">buy</span>
<div style="left:342px;top:483px;width:1px;height:21px;background:#cfcfcf;"></div>
<span class="t" style="right:721.5px;top:485px;color:#000;font-size:12.4px;">0.01</span>
<div style="left:402px;top:483px;width:1px;height:21px;background:#cfcfcf;"></div>
<span class="t" style="right:645.5px;top:485px;color:#000;font-size:12.4px;">gbpnzd</span>
<div style="left:478px;top:483px;width:1px;height:21px;background:#cfcfcf;"></div>
<span class="t" style="right:569.5px;top:485px;color:#000;font-size:12.4px;">1.89847</span>
<div style="left:554px;top:483px;width:1px;height:21px;background:#cfcfcf;"></div>
<span class="t" style="right:493.5px;top:485px;color:#000;font-size:12.4px;">0.00000</span>
<div style="left:630px;top:483px;width:1px;height:21px;background:#cfcfcf;"></div>
<span class="t" style="right:417.5px;top:485px;color:#000;font-size:12.4px;">1.89710</span>
<div style="left:706px;top:483px;width:1px;height:21px;background:#cfcfcf;"></div>
<span class="t" style="right:249.5px;top:485px;color:#000;font-size:12.4px;">2022.04.12 21:29:50</span>
<div style="left:874px;top:483px;width:1px;height:21px;background:#cfcfcf;"></div>
<span class="t" style="right:173.5px;top:485px;color:#000;font-size:12.4px;">1.89719</span>
<div style="left:950px;top:483px;width:1px;height:21px;background:#cfcfcf;"></div>
<span class="t" style="right:97.5px;top:485px;color:#000;font-size:12.4px;">0.00</span>
<div style="left:1026px;top:483px;width:1px;height:21px;background:#cfcfcf;"></div>
<span class="t" style="right:4.5px;top:485px;color:#000;font-size:12.4px;">-0.88</span>
<svg style="left:3px;top:485px" width="16" height="16" viewBox="0 0 16 16"><path d="M0.900 1.500h7.600l3 3v10h-10.600z" fill="url(#dg)" stroke="#4a4a4a" stroke-width="1"/><path d="M8.500 1.500v3h3" fill="#fff" stroke="#4a4a4a" stroke-width="0.9"/><path d="M1 15h10" stroke="#c4c4c4" stroke-width="0.8"/><circle cx="10.800" cy="12.100" r="3.200" fill="url(#cb)" stroke="#0a58b8" stroke-width="0.5"/></svg>
<div style="left:0;top:504px;width:1121px;height:20px;background:#fff;"></div>
<div style="left:0;top:524px;width:1121px;height:1px;background:#cfcfcf;"></div>
<div style="left:632px;top:504px;width:73px;height:19px;background:#5cec5c;"></div>
<span class="t" style="left:22px;top:506px;color:#000;font-size:12.6px;">16223574</span>
<div style="left:98px;top:504px;width:1px;height:21px;background:#cfcfcf;"></div>
<span class="t" style="right:857.5px;top:506px;color:#000;font-size:12.4px;">2022.04.12 21:18:02</span>
<div style="left:266px;top:504px;width:1px;height:21px;background:#cfcfcf;"></div>
<span class="t" style="right:781.5px;top:506px;color:#000;font-size:12.4px;">buy</span>
<div style="left:342px;top:504px;width:1px;height:21px;background:#cfcfcf;"></div>
<span class="t" style="right:721.5px;top:506px;color:#000;font-size:12.4px;">0.01</span>
<div style="left:402px;top:504px;width:1px;height:21px;background:#cfcfcf;"></div>
<span class="t" style="right:645.5px;top:506px;color:#000;font-size:12.4px;">gbpnzd</span>
<div style="left:478px;top:504px;width:1px;height:21px;background:#cfcfcf;"></div>
<span class="t" style="right:569.5px;top:506px;color:#000;font-size:12.4px;">1.89670</span>
<div style="left:554px;top:504px;width:1px;height:21px;background:#cfcfcf;"></div>
<span class="t" style="right:493.5px;top:506px;color:#000;font-size:12.4px;">0.00000</span>
<div style="left:630px;top:504px;width:1px;height:21px;background:#cfcfcf;"></div>
<span class="t" style="right:417.5px;top:506px;color:#000;font-size:12.4px;">1.89710</span>
<div style="left:706px;top:504px;width:1px;height:21px;background:#cfcfcf;"></div>
<span class="t" style="right:249.5px;top:506px;color:#000;font-size:12.4px;">2022.04.12 21:30:00</span>
<div style="left:874px;top:504px;width:1px;height:21px;background:#cfcfcf;"></div>
<span class="t" style="right:173.5px;top:506px;color:#000;font-size:12.4px;">1.89789</span>
<div style="left:950px;top:504px;width:1px;height:21px;background:#cfcfcf;"></div>
<span class="t" style="right:97.5px;top:506px;color:#000;font-size:12.4px;">0.00</span>
<div style="left:1026px;top:504px;width:1px;height:21px;background:#cfcfcf;"></div>
<span class="t" style="right:4.5px;top:506px;color:#000;font-size:12.4px;">0.82</span>
<svg style="left:3px;top:506px" width="16" height="16" viewBox="0 0 16 16"><path d="M0.900 1.500h7.600l3 3v10h-10.600z" fill="url(#dg)" stroke="#4a4a4a" stroke-width="1"/><path d="M8.500 1.500v3h3" fill="#fff" stroke="#4a4a4a" stroke-width="0.9"/><path d="M1 15h10" stroke="#c4c4c4" stroke-width="0.8"/><circle cx="10.800" cy="12.100" r="3.200" fill="url(#cb)" stroke="#0a58b8" stroke-width="0.5"/></svg>
<div style="left:0;top:525px;width:1121px;height:20px;background:#ececec;"></div>
<div style="left:0;top:545px;width:1121px;height:1px;background:#cfcfcf;"></div>
<div style="left:632px;top:525px;width:73px;height:19px;background:#5cec5c;"></div>
<span class="t" style="left:22px;top:527px;color:#000;font-size:12.6px;">16223594</span>
<div style="left:98px;top:525px;width:1px;height:21px;background:#cfcfcf;"></div>
<span class="t" style="right:857.5px;top:527px;color:#000;font-size:12.4px;">2022.04.12 21:18:14</span>
<div style="left:266px;top:525px;width:1px;height:21px;background:#cfcfcf;"></div>
<span class="t" style="right:781.5px;top:527px;color:#000;font-size:12.4px;">buy</span>
<div style="left:342px;top:525px;width:1px;height:21px;background:#cfcfcf;"></div>
<span class="t" style="right:721.5px;top:527px;color:#000;font-size:12.4px;">1.00</span>
<div style="left:402px;top:525px;width:1px;height:21px;background:#cfcfcf;"></div>
<span class="t" style="right:645.5px;top:527px;color:#000;font-size:12.4px;">gbpnzd</span>
<div style="left:478px;top:525px;width:1px;height:21px;background:#cfcfcf;"></div>
<span class="t" style="right:569.5px;top:527px;color:#000;font-size:12.4px;">1.89547</span>
<div style="left:554px;top:525px;width:1px;height:21px;background:#cfcfcf;"></div>
<span class="t" style="right:493.5px;top:527px;color:#000;font-size:12.4px;">0.00000</span>
<div style="left:630px;top:525px;width:1px;height:21px;background:#cfcfcf;"></div>
<span class="t" style="right:417.5px;top:527px;color:#000;font-size:12.4px;">1.89720</span>
<div style="left:706px;top:525px;width:1px;height:21px;background:#cfcfcf;"></div>
<span class="t" style="right:249.5px;top:527px;color:#000;font-size:12.4px;">2022.04.12 21:27:46</span>
<div style="left:874px;top:525px;width:1px;height:21px;background:#cfcfcf;"></div>
<span class="t" style="right:173.5px;top:527px;color:#000;font-size:12.4px;">1.89729</span>
<div style="left:950px;top:525px;width:1px;height:21px;background:#cfcfcf;"></div>
<span class="t" style="right:97.5px;top:527px;color:#000;font-size:12.4px;">0.00</span>
<div style="left:1026px;top:525px;width:1px;height:21px;background:#cfcfcf;"></div>
<span class="t" style="right:4.5px;top:527px;color:#000;font-size:12.4px;">124.63</span>
<svg style="left:3px;top:527px" width="16" height="16" viewBox="0 0 16 16"><path d="M0.900 1.500h7.600l3 3v10h-10.600z" fill="url(#dg)" stroke="#4a4a4a" stroke-width="1"/><path d="M8.500 1.500v3h3" fill="#fff" stroke="#4a4a4a" stroke-width="0.9"/><path d="M1 15h10" stroke="#c4c4c4" stroke-width="0.8"/><circle cx="10.800" cy="12.100" r="3.200" fill="url(#cb)" stroke="#0a58b8" stroke-width="0.5"/></svg>
<div style="left:0;top:546px;width:1121px;height:20px;background:#fff;"></div>
<div style="left:0;top:566px;width:1121px;height:1px;background:#cfcfcf;"></div>
<div style="left:632px;top:546px;width:73px;height:19px;background:#5cec5c;"></div>
<span class="t" style="left:22px;top:548px;color:#000;font-size:12.6px;">16223665</span>
<div style="left:98px;top:546px;width:1px;height:21px;background:#cfcfcf;"></div>
<span class="t" style="right:857.5px;top:548px;color:#000;font-size:12.4px;">2022.04.12 21:19:26</span>
<div style="left:266px;top:546px;width:1px;height:21px;background:#cfcfcf;"></div>
<span class="t" style="right:781.5px;top:548px;color:#000;font-size:12.4px;">buy</span>
<div style="left:342px;top:546px;width:1px;height:21px;background:#cfcfcf;"></div>
<span class="t" style="right:721.5px;top:548px;color:#000;font-size:12.4px;">1.00</span>
<div style="left:402px;top:546px;width:1px;height:21px;background:#cfcfcf;"></div>
<span class="t" style="right:645.5px;top:548px;color:#000;font-size:12.4px;">gbpnzd</span>
<div style="left:478px;top:546px;width:1px;height:21px;background:#cfcfcf;"></div>
<span class="t" style="right:569.5px;top:548px;color:#000;font-size:12.4px;">1.89597</span>
<div style="left:554px;top:546px;width:1px;height:21px;background:#cfcfcf;"></div>
<span class="t" style="right:493.5px;top:548px;color:#000;font-size:12.4px;">0.00000</span>
<div style="left:630px;top:546px;width:1px;height:21px;background:#cfcfcf;"></div>
<span class="t" style="right:417.5px;top:548px;color:#000;font-size:12.4px;">1.89720</span>
<div style="left:706px;top:546px;width:1px;height:21px;background:#cfcfcf;"></div>
<span class="t" style="right:249.5px;top:548px;color:#000;font-size:12.4px;">2022.04.12 21:27:46</span>
<div style="left:874px;top:546px;width:1px;height:21px;background:#cfcfcf;"></div>
<span class="t" style="right:173.5px;top:548px;color:#000;font-size:12.4px;">1.89729</span>
<div style="left:950px;top:546px;width:1px;height:21px;background:#cfcfcf;"></div>
<span class="t" style="right:97.5px;top:548px;color:#000;font-size:12.4px;">0.00</span>
<div style="left:1026px;top:546px;width:1px;height:21px;background:#cfcfcf;"></div>
<span class="t" style="right:4.5px;top:548px;color:#000;font-size:12.4px;">90.39</span>
<svg style="left:3px;top:548px" width="16" height="16" viewBox="0 0 16 16"><path d="M0.900 1.500h7.600l3 3v10h-10.600z" fill="url(#dg)" stroke="#4a4a4a" stroke-width="1"/><path d="M8.500 1.500v3h3" fill="#fff" stroke="#4a4a4a" stroke-width="0.9"/><path d="M1 15h10" stroke="#c4c4c4" stroke-width="0.8"/><circle cx="10.800" cy="12.100" r="3.200" fill="url(#cb)" stroke="#0a58b8" stroke-width="0.5"/></svg>
<div style="left:0;top:567px;width:1121px;height:20px;background:#ececec;"></div>
<div style="left:0;top:587px;width:1121px;height:1px;background:#cfcfcf;"></div>
<span class="t" style="left:22px;top:569px;color:#000;font-size:12.6px;">16223719</span>
<div style="left:98px;top:567px;width:1px;height:21px;background:#cfcfcf;"></div>
<span class="t" style="right:857.5px;top:569px;color:#000;font-size:12.4px;">2022.04.12 21:21:43</span>
<div style="left:266px;top:567px;width:1px;height:21px;background:#cfcfcf;"></div>
<span class="t" style="right:781.5px;top:569px;color:#000;font-size:12.4px;">buy</span>
<div style="left:342px;top:567px;width:1px;height:21px;background:#cfcfcf;"></div>
<span class="t" style="right:721.5px;top:569px;color:#000;font-size:12.4px;">0.01</span>
<div style="left:402px;top:567px;width:1px;height:21px;background:#cfcfcf;"></div>
<span class="t" style="right:645.5px;top:569px;color:#000;font-size:12.4px;">gbpnzd</span>
<div style="left:478px;top:567px;width:1px;height:21px;background:#cfcfcf;"></div>
<span class="t" style="right:569.5px;top:569px;color:#000;font-size:12.4px;">1.89592</span>
<div style="left:554px;top:567px;width:1px;height:21px;background:#cfcfcf;"></div>
<span class="t" style="right:493.5px;top:569px;color:#000;font-size:12.4px;">0.00000</span>
<div style="left:630px;top:567px;width:1px;height:21px;background:#cfcfcf;"></div>
<span class="t" style="right:417.5px;top:569px;color:#000;font-size:12.4px;">0.00000</span>
<div style="left:706px;top:567px;width:1px;height:21px;background:#cfcfcf;"></div>
<span class="t" style="right:249.5px;top:569px;color:#000;font-size:12.4px;">2022.04.12 21:22:23</span>
<div style="left:874px;top:567px;width:1px;height:21px;background:#cfcfcf;"></div>
<span class="t" style="right:173.5px;top:569px;color:#000;font-size:12.4px;">1.89590</span>
<div style="left:950px;top:567px;width:1px;height:21px;background:#cfcfcf;"></div>
<span class="t" style="right:97.5px;top:569px;color:#000;font-size:12.4px;">0.00</span>
<div style="left:1026px;top:567px;width:1px;height:21px;background:#cfcfcf;"></div>
<span class="t" style="right:4.5px;top:569px;color:#000;font-size:12.4px;">-0.01</span>
<svg style="left:3px;top:569px" width="16" height="16" viewBox="0 0 16 16"><path d="M0.900 1.500h7.600l3 3v10h-10.600z" fill="url(#dg)" stroke="#4a4a4a" stroke-width="1"/><path d="M8.500 1.500v3h3" fill="#fff" stroke="#4a4a4a" stroke-width="0.9"/><path d="M1 15h10" stroke="#c4c4c4" stroke-width="0.8"/><circle cx="10.800" cy="12.100" r="3.200" fill="url(#cb)" stroke="#0a58b8" stroke-width="0.5"/></svg>
<div style="left:0;top:588px;width:1121px;height:20px;background:#fff;"></div>
<div style="left:0;top:608px;width:1121px;height:1px;background:#cfcfcf;"></div>
<div style="left:632px;top:588px;width:73px;height:19px;background:#5cec5c;"></div>
<span class="t" style="left:22px;top:590px;color:#000;font-size:12.6px;">16223749</span>
<div style="left:98px;top:588px;width:1px;height:21px;background:#cfcfcf;"></div>
<span class="t" style="right:857.5px;top:590px;color:#000;font-size:12.4px;">2022.04.12 21:23:59</span>
<div style="left:266px;top:588px;width:1px;height:21px;background:#cfcfcf;"></div>
<span class="t" style="right:781.5px;top:590px;color:#000;font-size:12.4px;">buy</span>
<div style="left:342px;top:588px;width:1px;height:21px;background:#cfcfcf;"></div>
<span class="t" style="right:721.5px;top:590px;color:#000;font-size:12.4px;">1.00</span>
<div style="left:402px;top:588px;width:1px;height:21px;background:#cfcfcf;"></div>
<span class="t" style="right:645.5px;top:590px;color:#000;font-size:12.4px;">gbpnzd</span>
<div style="left:478px;top:588px;width:1px;height:21px;background:#cfcfcf;"></div>
<span class="t" style="right:569.5px;top:590px;color:#000;font-size:12.4px;">1.89607</span>
<div style="left:554px;top:588px;width:1px;height:21px;background:#cfcfcf;"></div>
<span class="t" style="right:493.5px;top:590px;color:#000;font-size:12.4px;">0.00000</span>
<div style="left:630px;top:588px;width:1px;height:21px;background:#cfcfcf;"></div>
<span class="t" style="right:417.5px;top:590px;color:#000;font-size:12.4px;">1.89720</span>
<div style="left:706px;top:588px;width:1px;height:21px;background:#cfcfcf;"></div>
<span class="t" style="right:249.5px;top:590px;color:#000;font-size:12.4px;">2022.04.12 21:27:46</span>
<div style="left:874px;top:588px;width:1px;height:21px;background:#cfcfcf;"></div>
<span class="t" style="right:173.5px;top:590px;color:#000;font-size:12.4px;">1.89729</span>
<div style="left:950px;top:588px;width:1px;height:21px;background:#cfcfcf;"></div>
<span class="t" style="right:97.5px;top:590px;color:#000;font-size:12.4px;">0.00</span>
<div style="left:1026px;top:588px;width:1px;height:21px;background:#cfcfcf;"></div>
<span class="t" style="right:4.5px;top:590px;color:#000;font-size:12.4px;">83.54</span>
<svg style="left:3px;top:590px" width="16" height="16" viewBox="0 0 16 16"><path d="M0.900 1.500h7.600l3 3v10h-10.600z" fill="url(#dg)" stroke="#4a4a4a" stroke-width="1"/><path d="M8.500 1.500v3h3" fill="#fff" stroke="#4a4a4a" stroke-width="0.9"/><path d="M1 15h10" stroke="#c4c4c4" stroke-width="0.8"/><circle cx="10.800" cy="12.100" r="3.200" fill="url(#cb)" stroke="#0a58b8" stroke-width="0.5"/></svg>
<div style="left:0;top:609px;width:1121px;height:20px;background:#ececec;"></div>
<div style="left:0;top:629px;width:1121px;height:1px;background:#cfcfcf;"></div>
<span class="t" style="left:22px;top:611px;color:#000;font-size:12.6px;">16223754</span>
<div style="left:98px;top:609px;width:1px;height:21px;background:#cfcfcf;"></div>
<span class="t" style="right:857.5px;top:611px;color:#000;font-size:12.4px;">2022.04.12 21:24:39</span>
<div style="left:266px;top:609px;width:1px;height:21px;background:#cfcfcf;"></div>
<span class="t" style="right:781.5px;top:611px;color:#000;font-size:12.4px;">buy limit</span>
<div style="left:342px;top:609px;width:1px;height:21px;background:#cfcfcf;"></div>
<span class="t" style="right:721.5px;top:611px;color:#000;font-size:12.4px;">1.00</span>
<div style="left:402px;top:609px;width:1px;height:21px;background:#cfcfcf;"></div>
<span class="t" style="right:645.5px;top:611px;color:#000;font-size:12.4px;">gbpnzd</span>
<div style="left:478px;top:609px;width:1px;height:21px;background:#cfcfcf;"></div>
<span class="t" style="right:569.5px;top:611px;color:#000;font-size:12.4px;">1.89550</span>
<div style="left:554px;top:609px;width:1px;height:21px;background:#cfcfcf;"></div>
<span class="t" style="right:493.5px;top:611px;color:#000;font-size:12.4px;">0.00000</span>
<div style="left:630px;top:609px;width:1px;height:21px;background:#cfcfcf;"></div>
<span class="t" style="right:417.5px;top:611px;color:#000;font-size:12.4px;">1.89750</span>
<div style="left:706px;top:609px;width:1px;height:21px;background:#cfcfcf;"></div>
<span class="t" style="right:249.5px;top:611px;color:#000;font-size:12.4px;">2022.04.12 22:00:15</span>
<div style="left:874px;top:609px;width:1px;height:21px;background:#cfcfcf;"></div>
<span class="t" style="right:173.5px;top:611px;color:#000;font-size:12.4px;">1.89727</span>
<div style="left:950px;top:609px;width:1px;height:21px;background:#cfcfcf;"></div>
<div style="left:1026px;top:609px;width:1px;height:21px;background:#cfcfcf;"></div>
<svg style="left:3px;top:611px" width="16" height="16" viewBox="0 0 16 16"><path d="M0.900 1.500h7.600l3 3v10h-10.600z" fill="url(#dg)" stroke="#4a4a4a" stroke-width="1"/><path d="M8.500 1.500v3h3" fill="#fff" stroke="#4a4a4a" stroke-width="0.9"/><path d="M1 15h10" stroke="#c4c4c4" stroke-width="0.8"/><circle cx="10.800" cy="12.100" r="3.200" fill="url(#cb)" stroke="#0a58b8" stroke-width="0.5"/></svg>
<div style="left:0;top:630px;width:1121px;height:20px;background:#fff;"></div>
<div style="left:0;top:650px;width:1121px;height:1px;background:#cfcfcf;"></div>
<span class="t" style="left:22px;top:632px;color:#000;font-size:12.6px;">16223841</span>
<div style="left:98px;top:630px;width:1px;height:21px;background:#cfcfcf;"></div>
<span class="t" style="right:857.5px;top:632px;color:#000;font-size:12.4px;">2022.04.12 21:39:45</span>
<div style="left:266px;top:630px;width:1px;height:21px;background:#cfcfcf;"></div>
<span class="t" style="right:781.5px;top:632px;color:#000;font-size:12.4px;">buy limit</span>
<div style="left:342px;top:630px;width:1px;height:21px;background:#cfcfcf;"></div>
<span class="t" style="right:721.5px;top:632px;color:#000;font-size:12.4px;">1.00</span>
<div style="left:402px;top:630px;width:1px;height:21px;background:#cfcfcf;"></div>
<span class="t" style="right:645.5px;top:632px;color:#000;font-size:12.4px;">gbpnzd</span>
<div style="left:478px;top:630px;width:1px;height:21px;background:#cfcfcf;"></div>
<span class="t" style="right:569.5px;top:632px;color:#000;font-size:12.4px;">1.89600</span>
<div style="left:554px;top:630px;width:1px;height:21px;background:#cfcfcf;"></div>
<span class="t" style="right:493.5px;top:632px;color:#000;font-size:12.4px;">0.00000</span>
<div style="left:630px;top:630px;width:1px;height:21px;background:#cfcfcf;"></div>
<span class="t" style="right:417.5px;top:632px;color:#000;font-size:12.4px;">1.89779</span>
<div style="left:706px;top:630px;width:1px;height:21px;background:#cfcfcf;"></div>
<span class="t" style="right:249.5px;top:632px;color:#000;font-size:12.4px;">2022.04.12 22:00:14</span>
<div style="left:874px;top:630px;width:1px;height:21px;background:#cfcfcf;"></div>
<span class="t" style="right:173.5px;top:632px;color:#000;font-size:12.4px;">1.89727</span>
<div style="left:950px;top:630px;width:1px;height:21px;background:#cfcfcf;"></div>
<div style="left:1026px;top:630px;width:1px;height:21px;background:#cfcfcf;"></div>
<svg style="left:3px;top:632px" width="16" height="16" viewBox="0 0 16 16"><path d="M0.900 1.500h7.600l3 3v10h-10.600z" fill="url(#dg)" stroke="#4a4a4a" stroke-width="1"/><path d="M8.500 1.500v3h3" fill="#fff" stroke="#4a4a4a" stroke-width="0.9"/><path d="M1 15h10" stroke="#c4c4c4" stroke-width="0.8"/><circle cx="10.800" cy="12.100" r="3.200" fill="url(#cb)" stroke="#0a58b8" stroke-width="0.5"/></svg>
<div style="left:0;top:651px;width:1121px;height:20px;background:#ececec;"></div>
<div style="left:0;top:671px;width:1121px;height:1px;background:#cfcfcf;"></div>
<span class="t" style="left:22px;top:653px;color:#000;font-size:12.6px;">16223842</span>
<div style="left:98px;top:651px;width:1px;height:21px;background:#cfcfcf;"></div>
<span class="t" style="right:857.5px;top:653px;color:#000;font-size:12.4px;">2022.04.12 21:40:04</span>
<div style="left:266px;top:651px;width:1px;height:21px;background:#cfcfcf;"></div>
<span class="t" style="right:781.5px;top:653px;color:#000;font-size:12.4px;">buy limit</span>
<div style="left:342px;top:651px;width:1px;height:21px;background:#cfcfcf;"></div>
<span class="t" style="right:721.5px;top:653px;color:#000;font-size:12.4px;">1.00</span>
<div style="left:402px;top:651px;width:1px;height:21px;background:#cfcfcf;"></div>
<span class="t" style="right:645.5px;top:653px;color:#000;font-size:12.4px;">gbpnzd</span>
<div style="left:478px;top:651px;width:1px;height:21px;background:#cfcfcf;"></div>
<span class="t" style="right:569.5px;top:653px;color:#000;font-size:12.4px;">1.89450</span>
<div style="left:554px;top:651px;width:1px;height:21px;background:#cfcfcf;"></div>
<span class="t" style="right:493.5px;top:653px;color:#000;font-size:12.4px;">0.00000</span>
<div style="left:630px;top:651px;width:1px;height:21px;background:#cfcfcf;"></div>
<span class="t" style="right:417.5px;top:653px;color:#000;font-size:12.4px;">1.89777</span>
<div style="left:706px;top:651px;width:1px;height:21px;background:#cfcfcf;"></div>
<span class="t" style="right:249.5px;top:653px;color:#000;font-size:12.4px;">2022.04.12 22:00:12</span>
<div style="left:874px;top:651px;width:1px;height:21px;background:#cfcfcf;"></div>
<span class="t" style="right:173.5px;top:653px;color:#000;font-size:12.4px;">1.89724</span>
<div style="left:950px;top:651px;width:1px;height:21px;background:#cfcfcf;"></div>
<div style="left:1026px;top:651px;width:1px;height:21px;background:#cfcfcf;"></div>
<svg style="left:3px;top:653px" width="16" height="16" viewBox="0 0 16 16"><path d="M0.900 1.500h7.600l3 3v10h-10.600z" fill="url(#dg)" stroke="#4a4a4a" stroke-width="1"/><path d="M8.500 1.500v3h3" fill="#fff" stroke="#4a4a4a" stroke-width="0.9"/><path d="M1 15h10" stroke="#c4c4c4" stroke-width="0.8"/><circle cx="10.800" cy="12.100" r="3.200" fill="url(#cb)" stroke="#0a58b8" stroke-width="0.5"/></svg>
</div>
<div style="left:1145px;top:220px;width:18px;height:685px;background:#f0f0f0;"></div>
<div style="left:1147px;top:238px;width:15px;height:408px;background:#cdcdcd;"></div>
<svg style="left:1149px;top:226px" width="10" height="8" viewBox="-5 -4 10 8"><path d="M-3.5 2l3.5-3.5 3.5 3.5" stroke="#505050" stroke-width="1.9" fill="none"/></svg>
<svg style="left:1149px;top:891px" width="10" height="8" viewBox="-5 -4 10 8"><path d="M-3.5 -2l3.5 3.5 3.5-3.5" stroke="#505050" stroke-width="1.9" fill="none"/></svg>
<div style="left:1163px;top:220px;width:1px;height:708px;background:#fff;"></div>
<div style="left:23px;top:905px;width:1143px;height:23px;background:#f0f0f0;"></div>
<div style="left:23px;top:904px;width:1139px;height:1px;background:#000;"></div>
<div style="left:114px;top:904px;width:68px;height:22px;background:#fff;border:1px solid #000;border-top:none;border-right-width:2px;border-bottom-width:2px;"></div>
<div style="left:115px;top:904px;width:65px;height:1px;background:#fff;"></div>
<span class="t" style="left:36px;top:908px;font-size:12px;color:#8a8a8a;">交易</span>
<span class="t" style="left:80px;top:908px;font-size:12px;color:#8a8a8a;">展示</span>
<span class="t" style="left:124px;top:908px;font-size:12px;color:#000;">账户历史</span>
<span class="t" style="left:192px;top:908px;font-size:12px;color:#8a8a8a;">新闻</span>
<span class="t" style="left:236px;top:908px;font-size:12px;color:#8a8a8a;">警报</span>
<span class="t" style="left:280px;top:908px;font-size:12px;color:#8a8a8a;">邮箱</span>
<span class="t" style="left:324px;top:908px;font-size:12px;color:#8a8a8a;">市场</span>
<span class="t" style="left:388px;top:908px;font-size:12px;color:#8a8a8a;">信号</span>
<span class="t" style="left:432px;top:908px;font-size:12px;color:#8a8a8a;">文章</span>
<span class="t" style="left:484px;top:908px;font-size:12px;color:#8a8a8a;">代码库</span>
<span class="t" style="left:540px;top:908px;font-size:12px;color:#8a8a8a;">EA</span>
<span class="t" style="left:575px;top:908px;font-size:12px;color:#8a8a8a;">日志</span>
<div style="left:70px;top:909px;width:1px;height:14px;background:#8a8a8a;"></div>
<div style="left:227px;top:909px;width:1px;height:14px;background:#8a8a8a;"></div>
<div style="left:270px;top:909px;width:1px;height:14px;background:#8a8a8a;"></div>
<div style="left:314px;top:909px;width:1px;height:14px;background:#8a8a8a;"></div>
<div style="left:378px;top:909px;width:1px;height:14px;background:#8a8a8a;"></div>
<div style="left:422px;top:909px;width:1px;height:14px;background:#8a8a8a;"></div>
<div style="left:474px;top:909px;width:1px;height:14px;background:#8a8a8a;"></div>
<div style="left:530px;top:909px;width:1px;height:14px;background:#8a8a8a;"></div>
<div style="left:566px;top:909px;width:1px;height:14px;background:#8a8a8a;"></div>
<div style="left:609px;top:909px;width:1px;height:14px;background:#8a8a8a;"></div>
<span class="t" style="left:349px;top:913px;font-size:9.5px;font-weight:bold;color:#e02020;line-height:12px;">107</span>
<span class="t" style="left:458px;top:912.5px;font-size:10.2px;font-weight:bold;color:#e02020;line-height:12px;">1</span>
<span class="t" style="left:4.5px;top:909px;width:24px;height:12px;line-height:12px;font-size:12px;color:#000;transform:rotate(-90deg);transform-origin:center;text-align:center;">终端</span>
<div style="left:8px;top:931px;width:1158px;height:1px;background:#a0a0a0;"></div>
<div style="left:8px;top:932px;width:1158px;height:1px;background:#fff;"></div>
<span class="t" style="left:9.5px;top:937px;font-size:12px;">寻求帮助,请按<span style="font-size:12.6px">F1</span>键</span>
<span class="t" style="left:357px;top:937px;font-size:12.6px;">Default</span>
<div style="left:351px;top:935px;width:1px;height:17px;background:#a0a0a0;"></div>
<div style="left:352px;top:935px;width:1px;height:17px;background:#fff;"></div>
<div style="left:486px;top:935px;width:1px;height:17px;background:#a0a0a0;"></div>
<div style="left:487px;top:935px;width:1px;height:17px;background:#fff;"></div>
<div style="left:603px;top:935px;width:1px;height:17px;background:#a0a0a0;"></div>
<div style="left:604px;top:935px;width:1px;height:17px;background:#fff;"></div>
<div style="left:685px;top:935px;width:1px;height:17px;background:#a0a0a0;"></div>
<div style="left:686px;top:935px;width:1px;height:17px;background:#fff;"></div>
<div style="left:766px;top:935px;width:1px;height:17px;background:#a0a0a0;"></div>
<div style="left:767px;top:935px;width:1px;height:17px;background:#fff;"></div>
<div style="left:845px;top:935px;width:1px;height:17px;background:#a0a0a0;"></div>
<div style="left:846px;top:935px;width:1px;height:17px;background:#fff;"></div>
<div style="left:924px;top:935px;width:1px;height:17px;background:#a0a0a0;"></div>
<div style="left:925px;top:935px;width:1px;height:17px;background:#fff;"></div>
<div style="left:1002px;top:935px;width:1px;height:17px;background:#a0a0a0;"></div>
<div style="left:1003px;top:935px;width:1px;height:17px;background:#fff;"></div>
<svg style="left:1008px;top:937px" width="26" height="14" viewBox="0 0 26 14"><path d="M1 0v9M3.500 0v10M6 0v11M8.500 0v12" stroke="#3a7a1a" stroke-width="1.6"/><path d="M11 3v11M13.500 2.500v11.500M16 2v12M18.500 1.500v12.500M21 1v13" stroke="#1a4a8a" stroke-width="1.600"/></svg>
<span class="t" style="left:1036px;top:937px;font-size:13px;">51077/11 kb</span>
<svg style="left:1152px;top:940px" width="13" height="13" viewBox="0 0 13 13"><path d="M12 1l-11 11M12 5l-7 7M12 9l-3 3" stroke="#a8a8a8" stroke-width="1"/></svg>
<div style="left:1165px;top:7px;width:1px;height:946px;background:#dcdcdc;"></div>
<div style="left:1166px;top:0px;width:4px;height:953px;background:linear-gradient(to bottom,#0b6acf 0,#0b6cd0 240px,#2a80d8 323px,#aab8cc 323px,#aab8cc 352px,#ccd2dc 352px,#ccd2dc 367px,#f4f4f4 367px,#f4f4f4 377px,#1a5ca8 377px,#1a5ca8 472px,#e6e6e6 472px,#e6e6e6 953px);"></div>
<div style="left:1167px;top:441px;width:3px;height:18px;background:#dfe8f4;"></div>
<div style="left:1168px;top:444px;width:2px;height:5px;background:#1a5ca8;"></div>
<div style="left:1168px;top:452px;width:2px;height:5px;background:#1a5ca8;"></div>
<div style="left:1166px;top:497px;width:4px;height:2px;background:#4a9a3a;"></div>
<div style="left:1166px;top:510px;width:4px;height:2px;background:#4a9a3a;"></div>
<div style="left:1166px;top:519px;width:4px;height:2px;background:#4a9a3a;"></div>
<div style="left:1166px;top:553px;width:3px;height:18px;background:#8a8a8a;"></div>
<div style="left:1166px;top:602px;width:4px;height:1px;background:#f4f4f4;"></div>
<div style="left:1166px;top:755px;width:4px;height:1px;background:#f4f4f4;"></div>
<div style="left:1166px;top:811px;width:4px;height:1px;background:#f4f4f4;"></div>
<div style="left:1166px;top:870px;width:4px;height:1px;background:#f4f4f4;"></div>
<div style="left:1166px;top:925px;width:4px;height:1px;background:#f4f4f4;"></div>
<span class="t" style="left:-2px;top:17.0px;width:120px;height:30px;line-height:30px;text-align:center;font-size:27px;font-weight:bold;font-style:italic;color:rgba(100,140,165,0.2);transform:rotate(-30deg);letter-spacing:-0.5px;pointer-events:none;">FX110<span style="font-size:21px;font-style:normal;">网</span></span>
<span class="t" style="left:232px;top:21.2px;width:120px;height:30px;line-height:30px;text-align:center;font-size:27px;font-weight:bold;font-style:italic;color:rgba(100,140,165,0.2);transform:rotate(-30deg);letter-spacing:-0.5px;pointer-events:none;">FX110<span style="font-size:21px;font-style:normal;">网</span></span>
<span class="t" style="left:466px;top:25.4px;width:120px;height:30px;line-height:30px;text-align:center;font-size:27px;font-weight:bold;font-style:italic;color:rgba(100,140,165,0.2);transform:rotate(-30deg);letter-spacing:-0.5px;pointer-events:none;">FX110<span style="font-size:21px;font-style:normal;">网</span></span>
<span class="t" style="left:700px;top:29.6px;width:120px;height:30px;line-height:30px;text-align:center;font-size:27px;font-weight:bold;font-style:italic;color:rgba(100,140,165,0.2);transform:rotate(-30deg);letter-spacing:-0.5px;pointer-events:none;">FX110<span style="font-size:21px;font-style:normal;">网</span></span>
<span class="t" style="left:934px;top:33.8px;width:120px;height:30px;line-height:30px;text-align:center;font-size:27px;font-weight:bold;font-style:italic;color:rgba(100,140,165,0.2);transform:rotate(-30deg);letter-spacing:-0.5px;pointer-events:none;">FX110<span style="font-size:21px;font-style:normal;">网</span></span>
<span class="t" style="left:-2px;top:211.0px;width:120px;height:30px;line-height:30px;text-align:center;font-size:27px;font-weight:bold;font-style:italic;color:rgba(100,140,165,0.2);transform:rotate(-30deg);letter-spacing:-0.5px;pointer-events:none;">FX110<span style="font-size:21px;font-style:normal;">网</span></span>
<span class="t" style="left:232px;top:215.2px;width:120px;height:30px;line-height:30px;text-align:center;font-size:27px;font-weight:bold;font-style:italic;color:rgba(100,140,165,0.2);transform:rotate(-30deg);letter-spacing:-0.5px;pointer-events:none;">FX110<span style="font-size:21px;font-style:normal;">网</span></span>
<span class="t" style="left:466px;top:219.4px;width:120px;height:30px;line-height:30px;text-align:center;font-size:27px;font-weight:bold;font-style:italic;color:rgba(100,140,165,0.2);transform:rotate(-30deg);letter-spacing:-0.5px;pointer-events:none;">FX110<span style="font-size:21px;font-style:normal;">网</span></span>
<span class="t" style="left:700px;top:223.6px;width:120px;height:30px;line-height:30px;text-align:center;font-size:27px;font-weight:bold;font-style:italic;color:rgba(100,140,165,0.2);transform:rotate(-30deg);letter-spacing:-0.5px;pointer-events:none;">FX110<span style="font-size:21px;font-style:normal;">网</span></span>
<span class="t" style="left:934px;top:227.8px;width:120px;height:30px;line-height:30px;text-align:center;font-size:27px;font-weight:bold;font-style:italic;color:rgba(100,140,165,0.2);transform:rotate(-30deg);letter-spacing:-0.5px;pointer-events:none;">FX110<span style="font-size:21px;font-style:normal;">网</span></span>
<span class="t" style="left:-2px;top:405.0px;width:120px;height:30px;line-height:30px;text-align:center;font-size:27px;font-weight:bold;font-style:italic;color:rgba(100,140,165,0.2);transform:rotate(-30deg);letter-spacing:-0.5px;pointer-events:none;">FX110<span style="font-size:21px;font-style:normal;">网</span></span>
<span class="t" style="left:232px;top:409.2px;width:120px;height:30px;line-height:30px;text-align:center;font-size:27px;font-weight:bold;font-style:italic;color:rgba(100,140,165,0.2);transform:rotate(-30deg);letter-spacing:-0.5px;pointer-events:none;">FX110<span style="font-size:21px;font-style:normal;">网</span></span>
<span class="t" style="left:466px;top:413.4px;width:120px;height:30px;line-height:30px;text-align:center;font-size:27px;font-weight:bold;font-style:italic;color:rgba(100,140,165,0.2);transform:rotate(-30deg);letter-spacing:-0.5px;pointer-events:none;">FX110<span style="font-size:21px;font-style:normal;">网</span></span>
<span class="t" style="left:700px;top:417.6px;width:120px;height:30px;line-height:30px;text-align:center;font-size:27px;font-weight:bold;font-style:italic;color:rgba(100,140,165,0.2);transform:rotate(-30deg);letter-spacing:-0.5px;pointer-events:none;">FX110<span style="font-size:21px;font-style:normal;">网</span></span>
<span class="t" style="left:934px;top:421.8px;width:120px;height:30px;line-height:30px;text-align:center;font-size:27px;font-weight:bold;font-style:italic;color:rgba(100,140,165,0.2);transform:rotate(-30deg);letter-spacing:-0.5px;pointer-events:none;">FX110<span style="font-size:21px;font-style:normal;">网</span></span>
<span class="t" style="left:-2px;top:599.0px;width:120px;height:30px;line-height:30px;text-align:center;font-size:27px;font-weight:bold;font-style:italic;color:rgba(100,140,165,0.2);transform:rotate(-30deg);letter-spacing:-0.5px;pointer-events:none;">FX110<span style="font-size:21px;font-style:normal;">网</span></span>
<span class="t" style="left:232px;top:603.2px;width:120px;height:30px;line-height:30px;text-align:center;font-size:27px;font-weight:bold;font-style:italic;color:rgba(100,140,165,0.2);transform:rotate(-30deg);letter-spacing:-0.5px;pointer-events:none;">FX110<span style="font-size:21px;font-style:normal;">网</span></span>
<span class="t" style="left:466px;top:607.4px;width:120px;height:30px;line-height:30px;text-align:center;font-size:27px;font-weight:bold;font-style:italic;color:rgba(100,140,165,0.2);transform:rotate(-30deg);letter-spacing:-0.5px;pointer-events:none;">FX110<span style="font-size:21px;font-style:normal;">网</span></span>
<span class="t" style="left:700px;top:611.6px;width:120px;height:30px;line-height:30px;text-align:center;font-size:27px;font-weight:bold;font-style:italic;color:rgba(100,140,165,0.2);transform:rotate(-30deg);letter-spacing:-0.5px;pointer-events:none;">FX110<span style="font-size:21px;font-style:normal;">网</span></span>
<span class="t" style="left:934px;top:615.8px;width:120px;height:30px;line-height:30px;text-align:center;font-size:27px;font-weight:bold;font-style:italic;color:rgba(100,140,165,0.2);transform:rotate(-30deg);letter-spacing:-0.5px;pointer-events:none;">FX110<span style="font-size:21px;font-style:normal;">网</span></span>
<span class="t" style="left:-2px;top:793.0px;width:120px;height:30px;line-height:30px;text-align:center;font-size:27px;font-weight:bold;font-style:italic;color:rgba(100,140,165,0.2);transform:rotate(-30deg);letter-spacing:-0.5px;pointer-events:none;">FX110<span style="font-size:21px;font-style:normal;">网</span></span>
<span class="t" style="left:232px;top:797.2px;width:120px;height:30px;line-height:30px;text-align:center;font-size:27px;font-weight:bold;font-style:italic;color:rgba(100,140,165,0.2);transform:rotate(-30deg);letter-spacing:-0.5px;pointer-events:none;">FX110<span style="font-size:21px;font-style:normal;">网</span></span>
<span class="t" style="left:466px;top:801.4px;width:120px;height:30px;line-height:30px;text-align:center;font-size:27px;font-weight:bold;font-style:italic;color:rgba(100,140,165,0.2);transform:rotate(-30deg);letter-spacing:-0.5px;pointer-events:none;">FX110<span style="font-size:21px;font-style:normal;">网</span></span>
<span class="t" style="left:700px;top:805.6px;width:120px;height:30px;line-height:30px;text-align:center;font-size:27px;font-weight:bold;font-style:italic;color:rgba(100,140,165,0.2);transform:rotate(-30deg);letter-spacing:-0.5px;pointer-events:none;">FX110<span style="font-size:21px;font-style:normal;">网</span></span>
<span class="t" style="left:934px;top:809.8px;width:120px;height:30px;line-height:30px;text-align:center;font-size:27px;font-weight:bold;font-style:italic;color:rgba(100,140,165,0.2);transform:rotate(-30deg);letter-spacing:-0.5px;pointer-events:none;">FX110<span style="font-size:21px;font-style:normal;">网</span></span>
</div>
</body></html>
